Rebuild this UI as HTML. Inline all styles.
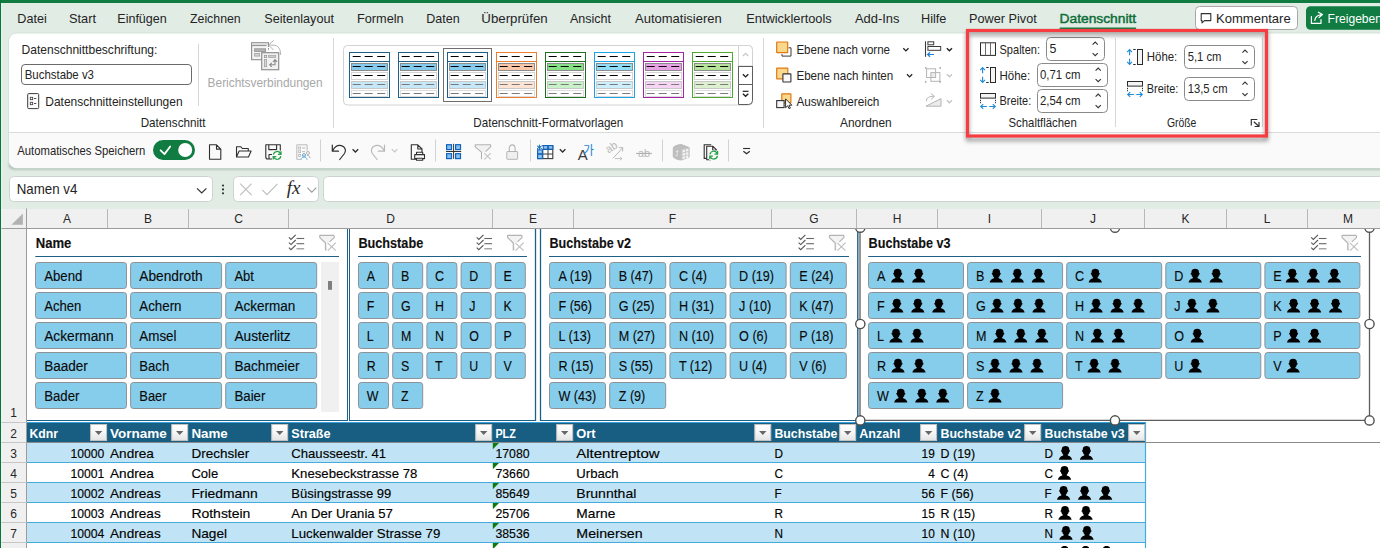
<!DOCTYPE html>
<html lang="de"><head><meta charset="utf-8"><title>Excel Datenschnitt</title>
<style>
html,body{margin:0;padding:0;background:#fff;overflow:hidden}
body{width:1380px;height:548px;font-family:'Liberation Sans', sans-serif;}
svg{display:block;font-family:'Liberation Sans', sans-serif;}
text{white-space:pre}
g.tb text{stroke:#000;stroke-width:.14px}
g.tb2 text{stroke:#111;stroke-width:.14px}
</style></head><body>
<svg width="1380" height="548" viewBox="0 0 1380 548">
<rect x="0" y="0" width="1380" height="548" fill="#e1ece5"/>
<rect x="0" y="0" width="1380" height="3" fill="#107c41"/>
<rect x="0" y="0" width="1.1" height="548" fill="#03763a"/>
<rect x="1.1" y="3" width="1" height="545" fill="#edf4ef"/>
<defs><filter id="fs" x="-5%" y="-20%" width="110%" height="150%"><feGaussianBlur stdDeviation="1.2"/></filter><filter id="fr" x="-10%" y="-15%" width="120%" height="135%"><feGaussianBlur stdDeviation="2.1"/></filter></defs>
<rect x="8.5" y="160" width="1400" height="9.8" rx="5" fill="#93a59a" filter="url(#fs)" opacity="0.6"/>
<rect x="8.5" y="33" width="1400" height="135" rx="8" fill="#ffffff" stroke="#d3e2d8" stroke-width="1"/>
<path d="M9 133h1380v27a8 8 0 0 1 -8 8h-1364a8 8 0 0 1 -8 -8z" fill="#fafafa"/>
<text x="17.3" y="22.6" font-size="13" fill="#242424" textLength="29.4" lengthAdjust="spacingAndGlyphs">Datei</text>
<text x="69.0" y="22.6" font-size="13" fill="#242424" textLength="27.0" lengthAdjust="spacingAndGlyphs">Start</text>
<text x="117.3" y="22.6" font-size="13" fill="#242424" textLength="49.4" lengthAdjust="spacingAndGlyphs">Einfügen</text>
<text x="190.0" y="22.6" font-size="13" fill="#242424" textLength="50.7" lengthAdjust="spacingAndGlyphs">Zeichnen</text>
<text x="264.3" y="22.6" font-size="13" fill="#242424" textLength="69.7" lengthAdjust="spacingAndGlyphs">Seitenlayout</text>
<text x="357.0" y="22.6" font-size="13" fill="#242424" textLength="46.7" lengthAdjust="spacingAndGlyphs">Formeln</text>
<text x="426.3" y="22.6" font-size="13" fill="#242424" textLength="33.4" lengthAdjust="spacingAndGlyphs">Daten</text>
<text x="481.3" y="22.6" font-size="13" fill="#242424" textLength="66.4" lengthAdjust="spacingAndGlyphs">Überprüfen</text>
<text x="570.0" y="22.6" font-size="13" fill="#242424" textLength="41.0" lengthAdjust="spacingAndGlyphs">Ansicht</text>
<text x="635.0" y="22.6" font-size="13" fill="#242424" textLength="86.7" lengthAdjust="spacingAndGlyphs">Automatisieren</text>
<text x="746.3" y="22.6" font-size="13" fill="#242424" textLength="85.4" lengthAdjust="spacingAndGlyphs">Entwicklertools</text>
<text x="855.0" y="22.6" font-size="13" fill="#242424" textLength="44.5" lengthAdjust="spacingAndGlyphs">Add-Ins</text>
<text x="921.0" y="22.6" font-size="13" fill="#242424" textLength="25.4" lengthAdjust="spacingAndGlyphs">Hilfe</text>
<text x="969.1" y="22.6" font-size="13" fill="#242424" textLength="67.7" lengthAdjust="spacingAndGlyphs">Power Pivot</text>
<text x="1059.5" y="22.6" font-size="13" fill="#0e6e39" textLength="76.7" lengthAdjust="spacingAndGlyphs" stroke="#0e6e39" stroke-width="0.45">Datenschnitt</text>
<rect x="1059.5" y="27.6" width="76.7" height="1.5" rx="0.7" fill="#107c41"/>
<rect x="1195.5" y="6.5" width="102" height="23" rx="4" fill="#ffffff" stroke="#a8a8a8" stroke-width="1"/>
<path d="M1201.2 13.6h9.6v7h-6.3l-2.5 2.3v-2.3h-0.8z" fill="none" stroke="#333" stroke-width="1.1" stroke-linejoin="round"/>
<text x="1216.0" y="22.6" font-size="13" fill="#242424" textLength="74.7" lengthAdjust="spacingAndGlyphs">Kommentare</text>
<rect x="1306" y="6.3" width="90" height="23.4" rx="4.5" fill="#107c41"/>
<path d="M1311.4 16.6v6.8h9.6v-3.8 M1314.8 20.4c0.4-3.3 2.9-5.4 6.8-5.8 M1318.4 12.2l4 2.4l-3.3 2.9" fill="none" stroke="#fff" stroke-width="1.2" stroke-linecap="round" stroke-linejoin="round"/>
<text transform="translate(1327.6,22.6) scale(0.93,1)" font-size="13" fill="#ffffff">Freigeben</text>
<line x1="9" y1="132.5" x2="1380" y2="132.5" stroke="#d9dcda" stroke-width="1"/>
<text x="21.5" y="54.2" font-size="13.5" fill="#242424" textLength="135.9" lengthAdjust="spacingAndGlyphs">Datenschnittbeschriftung:</text>
<rect x="21.5" y="64.5" width="170" height="20" rx="3.5" fill="#ffffff" stroke="#6b6b6b" stroke-width="1"/>
<text x="24.7" y="78.6" font-size="13.5" fill="#242424" textLength="69.3" lengthAdjust="spacingAndGlyphs">Buchstabe v3</text>
<rect x="27.7" y="93.6" width="11" height="15" rx="1" fill="#fdfdfd" stroke="#3b3b3b" stroke-width="1"/>
<rect x="30.3" y="97.3" width="2.4" height="2.4" fill="none" stroke="#3b3b3b" stroke-width="0.8"/>
<line x1="34" y1="98.5" x2="36.3" y2="98.5" stroke="#3b3b3b" stroke-width="0.9"/>
<rect x="30.3" y="102.3" width="2.4" height="2.4" fill="none" stroke="#3b3b3b" stroke-width="0.8"/>
<line x1="34" y1="103.5" x2="36.3" y2="103.5" stroke="#3b3b3b" stroke-width="0.9"/>
<text x="45.3" y="106.0" font-size="13.5" fill="#242424" textLength="137.3" lengthAdjust="spacingAndGlyphs">Datenschnitteinstellungen</text>
<text x="140.7" y="126.7" font-size="13.5" fill="#242424" textLength="64.9" lengthAdjust="spacingAndGlyphs">Datenschnitt</text>
<line x1="198.5" y1="44" x2="198.5" y2="106" stroke="#d6d6d6" stroke-width="1"/>
<rect x="251.6" y="42.7" width="16.9" height="17" fill="#f4f4f4" stroke="#8f8f8f" stroke-width="1.1"/>
<rect x="252.2" y="43.3" width="15.7" height="2" fill="#dadada"/>
<line x1="251.6" y1="45.6" x2="266.5" y2="45.6" stroke="#8f8f8f" stroke-width="1"/>
<rect x="254.6" y="48.8" width="11" height="2.6" fill="#b4b4b4" stroke="#8f8f8f" stroke-width="0.8"/>
<rect x="254.6" y="53.5" width="5" height="2.6" fill="#d2d2d2" stroke="#a2a2a2" stroke-width="0.8"/>
<rect x="266.8" y="47" width="3" height="5" fill="#ffffff"/>
<line x1="268.5" y1="48" x2="268.5" y2="51" stroke="#8f8f8f" stroke-width="1" stroke-dasharray="1.6 1.2"/>
<rect x="261.7" y="52.7" width="17" height="17" fill="#f1f1f1" stroke="#8f8f8f" stroke-width="1.2"/>
<rect x="264.4" y="55.4" width="2.2" height="2.2" fill="#e6e6e6" stroke="#9a9a9a" stroke-width="0.8"/>
<rect x="268.4" y="55.6" width="7.3" height="1.9" fill="#cccccc" stroke="#a2a2a2" stroke-width="0.7"/>
<rect x="264.4" y="59.5" width="2.2" height="7.2" fill="#d9d9d9" stroke="#a2a2a2" stroke-width="0.8"/>
<path d="M275 59.8v5h-5 M273 61.8l2-2.2l2 2.2 M271.8 62.8l-2.1 2l2.1 2" fill="none" stroke="#8a8a8a" stroke-width="1.1"/>
<path d="M280.4 55c0.6-5.6-2.2-10-7.4-9.9h-4 M273.6 40.4l-5 4.7l5 5" fill="none" stroke="#b2b2b2" stroke-width="1"/>
<text x="207.6" y="87.0" font-size="13.5" fill="#a8a8a8" textLength="115.0" lengthAdjust="spacingAndGlyphs">Berichtsverbindungen</text>
<line x1="333.5" y1="38" x2="333.5" y2="128" stroke="#d6d6d6" stroke-width="1"/>
<rect x="343.5" y="45.5" width="409" height="59.5" rx="4" fill="#ffffff" stroke="#d2d2d2" stroke-width="1"/>
<rect x="443.5" y="48.5" width="48" height="53" fill="#ffffff" stroke="#6e6e6e" stroke-width="1"/>
<rect x="349.5" y="52.5" width="40" height="45" fill="#ffffff" stroke="#1d5f86" stroke-width="1"/>
<line x1="349.5" y1="61.5" x2="389.5" y2="61.5" stroke="#1d5f86" stroke-width="1"/>
<rect x="351.5" y="63.5" width="36" height="7" fill="#84caec" stroke="#8c8c8c" stroke-width="1"/>
<rect x="351.5" y="72.5" width="36" height="7" fill="#ffffff" stroke="#d4d4d4" stroke-width="1"/>
<rect x="351.5" y="81.5" width="36" height="7" fill="#c6e7f7" stroke="#c8c8c8" stroke-width="1"/>
<rect x="351.5" y="90.5" width="36" height="6" fill="#ffffff" stroke="#dcdcdc" stroke-width="1"/>
<line x1="352.7" y1="56.5" x2="360.7" y2="56.5" stroke="#000" stroke-width="1"/>
<line x1="364.7" y1="56.5" x2="372.7" y2="56.5" stroke="#000" stroke-width="1"/>
<line x1="377.2" y1="56.5" x2="385.2" y2="56.5" stroke="#000" stroke-width="1"/>
<line x1="352.7" y1="66.5" x2="360.7" y2="66.5" stroke="#000" stroke-width="1"/>
<line x1="364.7" y1="66.5" x2="372.7" y2="66.5" stroke="#000" stroke-width="1"/>
<line x1="377.2" y1="66.5" x2="385.2" y2="66.5" stroke="#000" stroke-width="1"/>
<line x1="352.7" y1="75.5" x2="360.7" y2="75.5" stroke="#000" stroke-width="1"/>
<line x1="364.7" y1="75.5" x2="372.7" y2="75.5" stroke="#000" stroke-width="1"/>
<line x1="377.2" y1="75.5" x2="385.2" y2="75.5" stroke="#000" stroke-width="1"/>
<line x1="352.7" y1="84.5" x2="360.7" y2="84.5" stroke="#7a7a7a" stroke-width="1"/>
<line x1="364.7" y1="84.5" x2="372.7" y2="84.5" stroke="#7a7a7a" stroke-width="1"/>
<line x1="377.2" y1="84.5" x2="385.2" y2="84.5" stroke="#7a7a7a" stroke-width="1"/>
<line x1="352.7" y1="93.5" x2="360.7" y2="93.5" stroke="#7a7a7a" stroke-width="1"/>
<line x1="364.7" y1="93.5" x2="372.7" y2="93.5" stroke="#7a7a7a" stroke-width="1"/>
<line x1="377.2" y1="93.5" x2="385.2" y2="93.5" stroke="#7a7a7a" stroke-width="1"/>
<rect x="398.5" y="52.5" width="40" height="45" fill="#ffffff" stroke="#1d5f86" stroke-width="1"/>
<line x1="398.5" y1="61.5" x2="438.5" y2="61.5" stroke="#1d5f86" stroke-width="1"/>
<rect x="400.5" y="63.5" width="36" height="7" fill="#84caec" stroke="#8c8c8c" stroke-width="1"/>
<rect x="400.5" y="72.5" width="36" height="7" fill="#ffffff" stroke="#d4d4d4" stroke-width="1"/>
<rect x="400.5" y="81.5" width="36" height="7" fill="#c6e7f7" stroke="#c8c8c8" stroke-width="1"/>
<rect x="400.5" y="90.5" width="36" height="6" fill="#ffffff" stroke="#dcdcdc" stroke-width="1"/>
<line x1="401.7" y1="56.5" x2="409.7" y2="56.5" stroke="#000" stroke-width="1"/>
<line x1="413.7" y1="56.5" x2="421.7" y2="56.5" stroke="#000" stroke-width="1"/>
<line x1="426.2" y1="56.5" x2="434.2" y2="56.5" stroke="#000" stroke-width="1"/>
<line x1="401.7" y1="66.5" x2="409.7" y2="66.5" stroke="#000" stroke-width="1"/>
<line x1="413.7" y1="66.5" x2="421.7" y2="66.5" stroke="#000" stroke-width="1"/>
<line x1="426.2" y1="66.5" x2="434.2" y2="66.5" stroke="#000" stroke-width="1"/>
<line x1="401.7" y1="75.5" x2="409.7" y2="75.5" stroke="#000" stroke-width="1"/>
<line x1="413.7" y1="75.5" x2="421.7" y2="75.5" stroke="#000" stroke-width="1"/>
<line x1="426.2" y1="75.5" x2="434.2" y2="75.5" stroke="#000" stroke-width="1"/>
<line x1="401.7" y1="84.5" x2="409.7" y2="84.5" stroke="#7a7a7a" stroke-width="1"/>
<line x1="413.7" y1="84.5" x2="421.7" y2="84.5" stroke="#7a7a7a" stroke-width="1"/>
<line x1="426.2" y1="84.5" x2="434.2" y2="84.5" stroke="#7a7a7a" stroke-width="1"/>
<line x1="401.7" y1="93.5" x2="409.7" y2="93.5" stroke="#7a7a7a" stroke-width="1"/>
<line x1="413.7" y1="93.5" x2="421.7" y2="93.5" stroke="#7a7a7a" stroke-width="1"/>
<line x1="426.2" y1="93.5" x2="434.2" y2="93.5" stroke="#7a7a7a" stroke-width="1"/>
<rect x="447.5" y="52.5" width="40" height="45" fill="#ffffff" stroke="#1d5f86" stroke-width="1"/>
<line x1="447.5" y1="61.5" x2="487.5" y2="61.5" stroke="#1d5f86" stroke-width="1"/>
<rect x="449.5" y="63.5" width="36" height="7" fill="#84caec" stroke="#8c8c8c" stroke-width="1"/>
<rect x="449.5" y="72.5" width="36" height="7" fill="#ffffff" stroke="#d4d4d4" stroke-width="1"/>
<rect x="449.5" y="81.5" width="36" height="7" fill="#c6e7f7" stroke="#c8c8c8" stroke-width="1"/>
<rect x="449.5" y="90.5" width="36" height="6" fill="#ffffff" stroke="#dcdcdc" stroke-width="1"/>
<line x1="450.7" y1="56.5" x2="458.7" y2="56.5" stroke="#000" stroke-width="1"/>
<line x1="462.7" y1="56.5" x2="470.7" y2="56.5" stroke="#000" stroke-width="1"/>
<line x1="475.2" y1="56.5" x2="483.2" y2="56.5" stroke="#000" stroke-width="1"/>
<line x1="450.7" y1="66.5" x2="458.7" y2="66.5" stroke="#000" stroke-width="1"/>
<line x1="462.7" y1="66.5" x2="470.7" y2="66.5" stroke="#000" stroke-width="1"/>
<line x1="475.2" y1="66.5" x2="483.2" y2="66.5" stroke="#000" stroke-width="1"/>
<line x1="450.7" y1="75.5" x2="458.7" y2="75.5" stroke="#000" stroke-width="1"/>
<line x1="462.7" y1="75.5" x2="470.7" y2="75.5" stroke="#000" stroke-width="1"/>
<line x1="475.2" y1="75.5" x2="483.2" y2="75.5" stroke="#000" stroke-width="1"/>
<line x1="450.7" y1="84.5" x2="458.7" y2="84.5" stroke="#7a7a7a" stroke-width="1"/>
<line x1="462.7" y1="84.5" x2="470.7" y2="84.5" stroke="#7a7a7a" stroke-width="1"/>
<line x1="475.2" y1="84.5" x2="483.2" y2="84.5" stroke="#7a7a7a" stroke-width="1"/>
<line x1="450.7" y1="93.5" x2="458.7" y2="93.5" stroke="#7a7a7a" stroke-width="1"/>
<line x1="462.7" y1="93.5" x2="470.7" y2="93.5" stroke="#7a7a7a" stroke-width="1"/>
<line x1="475.2" y1="93.5" x2="483.2" y2="93.5" stroke="#7a7a7a" stroke-width="1"/>
<rect x="496.5" y="52.5" width="40" height="45" fill="#ffffff" stroke="#ee7c31" stroke-width="1"/>
<line x1="496.5" y1="61.5" x2="536.5" y2="61.5" stroke="#ee7c31" stroke-width="1"/>
<rect x="498.5" y="63.5" width="36" height="7" fill="#f9c6a8" stroke="#8c8c8c" stroke-width="1"/>
<rect x="498.5" y="72.5" width="36" height="7" fill="#ffffff" stroke="#d4d4d4" stroke-width="1"/>
<rect x="498.5" y="81.5" width="36" height="7" fill="#fde3d4" stroke="#c8c8c8" stroke-width="1"/>
<rect x="498.5" y="90.5" width="36" height="6" fill="#ffffff" stroke="#dcdcdc" stroke-width="1"/>
<line x1="499.7" y1="56.5" x2="507.7" y2="56.5" stroke="#000" stroke-width="1"/>
<line x1="511.7" y1="56.5" x2="519.7" y2="56.5" stroke="#000" stroke-width="1"/>
<line x1="524.2" y1="56.5" x2="532.2" y2="56.5" stroke="#000" stroke-width="1"/>
<line x1="499.7" y1="66.5" x2="507.7" y2="66.5" stroke="#000" stroke-width="1"/>
<line x1="511.7" y1="66.5" x2="519.7" y2="66.5" stroke="#000" stroke-width="1"/>
<line x1="524.2" y1="66.5" x2="532.2" y2="66.5" stroke="#000" stroke-width="1"/>
<line x1="499.7" y1="75.5" x2="507.7" y2="75.5" stroke="#000" stroke-width="1"/>
<line x1="511.7" y1="75.5" x2="519.7" y2="75.5" stroke="#000" stroke-width="1"/>
<line x1="524.2" y1="75.5" x2="532.2" y2="75.5" stroke="#000" stroke-width="1"/>
<line x1="499.7" y1="84.5" x2="507.7" y2="84.5" stroke="#7a7a7a" stroke-width="1"/>
<line x1="511.7" y1="84.5" x2="519.7" y2="84.5" stroke="#7a7a7a" stroke-width="1"/>
<line x1="524.2" y1="84.5" x2="532.2" y2="84.5" stroke="#7a7a7a" stroke-width="1"/>
<line x1="499.7" y1="93.5" x2="507.7" y2="93.5" stroke="#7a7a7a" stroke-width="1"/>
<line x1="511.7" y1="93.5" x2="519.7" y2="93.5" stroke="#7a7a7a" stroke-width="1"/>
<line x1="524.2" y1="93.5" x2="532.2" y2="93.5" stroke="#7a7a7a" stroke-width="1"/>
<rect x="545.5" y="52.5" width="40" height="45" fill="#ffffff" stroke="#1f6e1f" stroke-width="1"/>
<line x1="545.5" y1="61.5" x2="585.5" y2="61.5" stroke="#1f6e1f" stroke-width="1"/>
<rect x="547.5" y="63.5" width="36" height="7" fill="#86e086" stroke="#8c8c8c" stroke-width="1"/>
<rect x="547.5" y="72.5" width="36" height="7" fill="#ffffff" stroke="#d4d4d4" stroke-width="1"/>
<rect x="547.5" y="81.5" width="36" height="7" fill="#c9f1c9" stroke="#c8c8c8" stroke-width="1"/>
<rect x="547.5" y="90.5" width="36" height="6" fill="#ffffff" stroke="#dcdcdc" stroke-width="1"/>
<line x1="548.7" y1="56.5" x2="556.7" y2="56.5" stroke="#000" stroke-width="1"/>
<line x1="560.7" y1="56.5" x2="568.7" y2="56.5" stroke="#000" stroke-width="1"/>
<line x1="573.2" y1="56.5" x2="581.2" y2="56.5" stroke="#000" stroke-width="1"/>
<line x1="548.7" y1="66.5" x2="556.7" y2="66.5" stroke="#000" stroke-width="1"/>
<line x1="560.7" y1="66.5" x2="568.7" y2="66.5" stroke="#000" stroke-width="1"/>
<line x1="573.2" y1="66.5" x2="581.2" y2="66.5" stroke="#000" stroke-width="1"/>
<line x1="548.7" y1="75.5" x2="556.7" y2="75.5" stroke="#000" stroke-width="1"/>
<line x1="560.7" y1="75.5" x2="568.7" y2="75.5" stroke="#000" stroke-width="1"/>
<line x1="573.2" y1="75.5" x2="581.2" y2="75.5" stroke="#000" stroke-width="1"/>
<line x1="548.7" y1="84.5" x2="556.7" y2="84.5" stroke="#7a7a7a" stroke-width="1"/>
<line x1="560.7" y1="84.5" x2="568.7" y2="84.5" stroke="#7a7a7a" stroke-width="1"/>
<line x1="573.2" y1="84.5" x2="581.2" y2="84.5" stroke="#7a7a7a" stroke-width="1"/>
<line x1="548.7" y1="93.5" x2="556.7" y2="93.5" stroke="#7a7a7a" stroke-width="1"/>
<line x1="560.7" y1="93.5" x2="568.7" y2="93.5" stroke="#7a7a7a" stroke-width="1"/>
<line x1="573.2" y1="93.5" x2="581.2" y2="93.5" stroke="#7a7a7a" stroke-width="1"/>
<rect x="594.5" y="52.5" width="40" height="45" fill="#ffffff" stroke="#1ba3e4" stroke-width="1"/>
<line x1="594.5" y1="61.5" x2="634.5" y2="61.5" stroke="#1ba3e4" stroke-width="1"/>
<rect x="596.5" y="63.5" width="36" height="7" fill="#8fdcf8" stroke="#8c8c8c" stroke-width="1"/>
<rect x="596.5" y="72.5" width="36" height="7" fill="#ffffff" stroke="#d4d4d4" stroke-width="1"/>
<rect x="596.5" y="81.5" width="36" height="7" fill="#cdeefb" stroke="#c8c8c8" stroke-width="1"/>
<rect x="596.5" y="90.5" width="36" height="6" fill="#ffffff" stroke="#dcdcdc" stroke-width="1"/>
<line x1="597.7" y1="56.5" x2="605.7" y2="56.5" stroke="#000" stroke-width="1"/>
<line x1="609.7" y1="56.5" x2="617.7" y2="56.5" stroke="#000" stroke-width="1"/>
<line x1="622.2" y1="56.5" x2="630.2" y2="56.5" stroke="#000" stroke-width="1"/>
<line x1="597.7" y1="66.5" x2="605.7" y2="66.5" stroke="#000" stroke-width="1"/>
<line x1="609.7" y1="66.5" x2="617.7" y2="66.5" stroke="#000" stroke-width="1"/>
<line x1="622.2" y1="66.5" x2="630.2" y2="66.5" stroke="#000" stroke-width="1"/>
<line x1="597.7" y1="75.5" x2="605.7" y2="75.5" stroke="#000" stroke-width="1"/>
<line x1="609.7" y1="75.5" x2="617.7" y2="75.5" stroke="#000" stroke-width="1"/>
<line x1="622.2" y1="75.5" x2="630.2" y2="75.5" stroke="#000" stroke-width="1"/>
<line x1="597.7" y1="84.5" x2="605.7" y2="84.5" stroke="#7a7a7a" stroke-width="1"/>
<line x1="609.7" y1="84.5" x2="617.7" y2="84.5" stroke="#7a7a7a" stroke-width="1"/>
<line x1="622.2" y1="84.5" x2="630.2" y2="84.5" stroke="#7a7a7a" stroke-width="1"/>
<line x1="597.7" y1="93.5" x2="605.7" y2="93.5" stroke="#7a7a7a" stroke-width="1"/>
<line x1="609.7" y1="93.5" x2="617.7" y2="93.5" stroke="#7a7a7a" stroke-width="1"/>
<line x1="622.2" y1="93.5" x2="630.2" y2="93.5" stroke="#7a7a7a" stroke-width="1"/>
<rect x="643.5" y="52.5" width="40" height="45" fill="#ffffff" stroke="#a424a4" stroke-width="1"/>
<line x1="643.5" y1="61.5" x2="683.5" y2="61.5" stroke="#a424a4" stroke-width="1"/>
<rect x="645.5" y="63.5" width="36" height="7" fill="#e9a1e6" stroke="#8c8c8c" stroke-width="1"/>
<rect x="645.5" y="72.5" width="36" height="7" fill="#ffffff" stroke="#d4d4d4" stroke-width="1"/>
<rect x="645.5" y="81.5" width="36" height="7" fill="#f6d4f4" stroke="#c8c8c8" stroke-width="1"/>
<rect x="645.5" y="90.5" width="36" height="6" fill="#ffffff" stroke="#dcdcdc" stroke-width="1"/>
<line x1="646.7" y1="56.5" x2="654.7" y2="56.5" stroke="#000" stroke-width="1"/>
<line x1="658.7" y1="56.5" x2="666.7" y2="56.5" stroke="#000" stroke-width="1"/>
<line x1="671.2" y1="56.5" x2="679.2" y2="56.5" stroke="#000" stroke-width="1"/>
<line x1="646.7" y1="66.5" x2="654.7" y2="66.5" stroke="#000" stroke-width="1"/>
<line x1="658.7" y1="66.5" x2="666.7" y2="66.5" stroke="#000" stroke-width="1"/>
<line x1="671.2" y1="66.5" x2="679.2" y2="66.5" stroke="#000" stroke-width="1"/>
<line x1="646.7" y1="75.5" x2="654.7" y2="75.5" stroke="#000" stroke-width="1"/>
<line x1="658.7" y1="75.5" x2="666.7" y2="75.5" stroke="#000" stroke-width="1"/>
<line x1="671.2" y1="75.5" x2="679.2" y2="75.5" stroke="#000" stroke-width="1"/>
<line x1="646.7" y1="84.5" x2="654.7" y2="84.5" stroke="#7a7a7a" stroke-width="1"/>
<line x1="658.7" y1="84.5" x2="666.7" y2="84.5" stroke="#7a7a7a" stroke-width="1"/>
<line x1="671.2" y1="84.5" x2="679.2" y2="84.5" stroke="#7a7a7a" stroke-width="1"/>
<line x1="646.7" y1="93.5" x2="654.7" y2="93.5" stroke="#7a7a7a" stroke-width="1"/>
<line x1="658.7" y1="93.5" x2="666.7" y2="93.5" stroke="#7a7a7a" stroke-width="1"/>
<line x1="671.2" y1="93.5" x2="679.2" y2="93.5" stroke="#7a7a7a" stroke-width="1"/>
<rect x="692.5" y="52.5" width="40" height="45" fill="#ffffff" stroke="#4ea72e" stroke-width="1"/>
<line x1="692.5" y1="61.5" x2="732.5" y2="61.5" stroke="#4ea72e" stroke-width="1"/>
<rect x="694.5" y="63.5" width="36" height="7" fill="#b4e29a" stroke="#8c8c8c" stroke-width="1"/>
<rect x="694.5" y="72.5" width="36" height="7" fill="#ffffff" stroke="#d4d4d4" stroke-width="1"/>
<rect x="694.5" y="81.5" width="36" height="7" fill="#dcf0cf" stroke="#c8c8c8" stroke-width="1"/>
<rect x="694.5" y="90.5" width="36" height="6" fill="#ffffff" stroke="#dcdcdc" stroke-width="1"/>
<line x1="695.7" y1="56.5" x2="703.7" y2="56.5" stroke="#000" stroke-width="1"/>
<line x1="707.7" y1="56.5" x2="715.7" y2="56.5" stroke="#000" stroke-width="1"/>
<line x1="720.2" y1="56.5" x2="728.2" y2="56.5" stroke="#000" stroke-width="1"/>
<line x1="695.7" y1="66.5" x2="703.7" y2="66.5" stroke="#000" stroke-width="1"/>
<line x1="707.7" y1="66.5" x2="715.7" y2="66.5" stroke="#000" stroke-width="1"/>
<line x1="720.2" y1="66.5" x2="728.2" y2="66.5" stroke="#000" stroke-width="1"/>
<line x1="695.7" y1="75.5" x2="703.7" y2="75.5" stroke="#000" stroke-width="1"/>
<line x1="707.7" y1="75.5" x2="715.7" y2="75.5" stroke="#000" stroke-width="1"/>
<line x1="720.2" y1="75.5" x2="728.2" y2="75.5" stroke="#000" stroke-width="1"/>
<line x1="695.7" y1="84.5" x2="703.7" y2="84.5" stroke="#7a7a7a" stroke-width="1"/>
<line x1="707.7" y1="84.5" x2="715.7" y2="84.5" stroke="#7a7a7a" stroke-width="1"/>
<line x1="720.2" y1="84.5" x2="728.2" y2="84.5" stroke="#7a7a7a" stroke-width="1"/>
<line x1="695.7" y1="93.5" x2="703.7" y2="93.5" stroke="#7a7a7a" stroke-width="1"/>
<line x1="707.7" y1="93.5" x2="715.7" y2="93.5" stroke="#7a7a7a" stroke-width="1"/>
<line x1="720.2" y1="93.5" x2="728.2" y2="93.5" stroke="#7a7a7a" stroke-width="1"/>
<path d="M738.5 45.5 h10 a4 4 0 0 1 4 4 v16.5 h-14z" fill="#ffffff" stroke="#d2d2d2" stroke-width="1"/>
<path d="M742.9 56l2.7-2.6l2.7 2.6" fill="none" stroke="#c8c8c8" stroke-width="1.3"/>
<rect x="738.5" y="66.5" width="14" height="18" fill="#ffffff" stroke="#5e5e5e" stroke-width="1"/>
<path d="M742.9 74.3l2.7 2.6l2.7-2.6" fill="none" stroke="#222" stroke-width="1.4"/>
<path d="M738.5 84.5 h14 v16 a4 4 0 0 1 -4 4 h-10z" fill="#ffffff" stroke="#5e5e5e" stroke-width="1"/>
<line x1="742.7" y1="91.3" x2="748.5" y2="91.3" stroke="#222" stroke-width="1.2"/>
<path d="M742.9 93.7l2.7 2.6l2.7-2.6" fill="none" stroke="#222" stroke-width="1.4"/>
<text x="473.3" y="126.7" font-size="13.5" fill="#242424" textLength="150.0" lengthAdjust="spacingAndGlyphs">Datenschnitt-Formatvorlagen</text>
<line x1="763.5" y1="38" x2="763.5" y2="128" stroke="#d6d6d6" stroke-width="1"/>
<path d="M788.5 47.8h2.5v8.3h-9v-2" fill="none" stroke="#3b3b3b" stroke-width="1"/>
<rect x="776.7" y="42" width="11" height="10.6" rx="0.4" fill="#f9d88e" stroke="#e07810" stroke-width="1.2"/>
<text x="796.4" y="53.5" font-size="13.5" fill="#242424" textLength="93.6" lengthAdjust="spacingAndGlyphs">Ebene nach vorne</text>
<path d="M903.3 48.3l2.6 2.6l2.6-2.6" fill="none" stroke="#222" stroke-width="1.3"/>
<rect x="776.7" y="68.1" width="11.1" height="10.8" rx="0.4" fill="#f9d88e" stroke="#e07810" stroke-width="1.2"/>
<rect x="782.9" y="73.9" width="8" height="8.1" rx="0.4" fill="#f8f8f8" stroke="#333333" stroke-width="1.1"/>
<text x="796.4" y="79.5" font-size="13.5" fill="#242424" textLength="96.9" lengthAdjust="spacingAndGlyphs">Ebene nach hinten</text>
<path d="M907 74.3l2.6 2.6l2.6-2.6" fill="none" stroke="#222" stroke-width="1.3"/>
<rect x="781.8" y="93.8" width="9.1" height="9" rx="0.4" fill="#f9d88e" stroke="#e07810" stroke-width="1.2"/>
<rect x="776.7" y="100.6" width="7.4" height="7" fill="#f8f8f8" stroke="#333333" stroke-width="1.1"/>
<path d="M785.6 98.9v8.8l2.1-1.9l1.4 2.9l1.3-0.6l-1.4-2.9h2.9z" fill="#ffffff" stroke="#1a1a1a" stroke-width="0.9" stroke-linejoin="round"/>
<text x="796.4" y="105.5" font-size="13.5" fill="#242424" textLength="82.9" lengthAdjust="spacingAndGlyphs">Auswahlbereich</text>
<text x="840.0" y="126.7" font-size="13.5" fill="#242424" textLength="51.7" lengthAdjust="spacingAndGlyphs">Anordnen</text>
<line x1="925.5" y1="41.3" x2="925.5" y2="56.8" stroke="#3b3b3b" stroke-width="1.1"/>
<rect x="927.9" y="41.8" width="5.8" height="3" fill="none" stroke="#3b3b3b" stroke-width="1"/>
<rect x="927.9" y="46.5" width="12.8" height="3.8" fill="none" stroke="#3b3b3b" stroke-width="1"/>
<path d="M934 54.5h-6.3 M930 52.2l-2.4 2.3l2.4 2.3" fill="none" stroke="#1e7fd6" stroke-width="1.2"/>
<path d="M946.8 48.2l2.6 2.5l2.6-2.5" fill="none" stroke="#222" stroke-width="1.4"/>
<rect x="930.9" y="72.6" width="4.7" height="4.8" fill="#ececec"/>
<rect x="926.6" y="68.8" width="9" height="8.7" fill="none" stroke="#b4b4b4" stroke-width="1"/>
<rect x="930.9" y="72.6" width="9" height="8.7" fill="none" stroke="#b4b4b4" stroke-width="1"/>
<rect x="924.9" y="67.1" width="1.6" height="1.6" fill="#a8a8a8"/>
<rect x="939.4" y="67.1" width="1.6" height="1.6" fill="#a8a8a8"/>
<rect x="924.9" y="81.1" width="1.6" height="1.6" fill="#a8a8a8"/>
<rect x="939.4" y="81.1" width="1.6" height="1.6" fill="#a8a8a8"/>
<path d="M946.8 74.3l2.6 2.5l2.6-2.5" fill="none" stroke="#c2c2c2" stroke-width="1.2"/>
<path d="M926 106.2h15v-7.6z" fill="#ececec" stroke="#b4b4b4" stroke-width="1"/>
<path d="M926.6 101.4c-0.8-3.6 3-5.4 7.4-5 M930.8 93.5l3.6 2.9l-3.4 3" fill="none" stroke="#b4b4b4" stroke-width="1"/>
<path d="M946.8 100.3l2.6 2.5l2.6-2.5" fill="none" stroke="#c2c2c2" stroke-width="1.2"/>
<rect x="980.5" y="42.8" width="15" height="12.6" fill="#fdfdfd" stroke="#2b2b2b" stroke-width="1"/>
<line x1="985.5" y1="43" x2="985.5" y2="55.2" stroke="#6a6a6a" stroke-width="1"/>
<line x1="990.5" y1="43" x2="990.5" y2="55.2" stroke="#6a6a6a" stroke-width="1"/>
<text x="999.5" y="53.5" font-size="13.5" fill="#242424" textLength="40.5" lengthAdjust="spacingAndGlyphs">Spalten:</text>
<rect x="1046.5" y="37.5" width="58" height="23" rx="4" fill="#ffffff" stroke="#8a8a8a" stroke-width="1"/>
<text transform="translate(1049.6,53.0) scale(0.92,1)" font-size="13.5" fill="#242424">5</text>
<path d="M1092.6000000000001 44.7l2.6-2.6l2.6 2.6" fill="none" stroke="#333" stroke-width="1.1"/>
<path d="M1092.6000000000001 53.1l2.6 2.6l2.6-2.6" fill="none" stroke="#333" stroke-width="1.1"/>
<path d="M982.6 67.7v5.5 M982.6 76.8v5.5 M980.2 70.1l2.4-2.5l2.4 2.5 M980.2 79.9l2.4 2.5l2.4-2.5" fill="none" stroke="#1e8ad6" stroke-width="1.1"/>
<rect x="990.5" y="67.5" width="5" height="15" fill="#f4f4f4" stroke="#2b2b2b" stroke-width="1"/>
<line x1="986.2" y1="67.5" x2="988.7" y2="67.5" stroke="#2b2b2b" stroke-width="1"/>
<line x1="986.2" y1="82.5" x2="988.7" y2="82.5" stroke="#2b2b2b" stroke-width="1"/>
<text x="999.5" y="79.5" font-size="13.5" fill="#242424" textLength="30.7" lengthAdjust="spacingAndGlyphs">Höhe:</text>
<rect x="1037.5" y="63.5" width="70" height="23" rx="4" fill="#ffffff" stroke="#8a8a8a" stroke-width="1"/>
<text x="1040.0" y="79.0" font-size="13.5" fill="#242424" textLength="40.5" lengthAdjust="spacingAndGlyphs">0,71 cm</text>
<path d="M1095.6000000000001 70.7l2.6-2.6l2.6 2.6" fill="none" stroke="#333" stroke-width="1.1"/>
<path d="M1095.6000000000001 79.1l2.6 2.6l2.6-2.6" fill="none" stroke="#333" stroke-width="1.1"/>
<rect x="980.5" y="93.5" width="15" height="4.6" fill="#f4f4f4" stroke="#2b2b2b" stroke-width="1"/>
<line x1="980.5" y1="99.8" x2="980.5" y2="103.2" stroke="#2b2b2b" stroke-width="1" stroke-dasharray="1.4 0.9"/>
<line x1="995.5" y1="99.8" x2="995.5" y2="103.2" stroke="#2b2b2b" stroke-width="1" stroke-dasharray="1.4 0.9"/>
<path d="M980.7 106.5h6.2 M989.3 106.5h6 M983.2 104.1l-2.5 2.4l2.5 2.4 M992.8 104.1l2.5 2.4l-2.5 2.4" fill="none" stroke="#1e8ad6" stroke-width="1.1"/>
<text x="999.5" y="105.3" font-size="13.5" fill="#242424" textLength="31.7" lengthAdjust="spacingAndGlyphs">Breite:</text>
<rect x="1037.5" y="89.5" width="70" height="23" rx="4" fill="#ffffff" stroke="#8a8a8a" stroke-width="1"/>
<text x="1040.0" y="105.0" font-size="13.5" fill="#242424" textLength="40.5" lengthAdjust="spacingAndGlyphs">2,54 cm</text>
<path d="M1095.6000000000001 96.7l2.6-2.6l2.6 2.6" fill="none" stroke="#333" stroke-width="1.1"/>
<path d="M1095.6000000000001 105.1l2.6 2.6l2.6-2.6" fill="none" stroke="#333" stroke-width="1.1"/>
<text x="1008.5" y="126.9" font-size="13.5" fill="#242424" textLength="68.2" lengthAdjust="spacingAndGlyphs">Schaltflächen</text>
<line x1="1115.5" y1="38" x2="1115.5" y2="127" stroke="#d6d6d6" stroke-width="1"/>
<path d="M1129.6 49.7v5.5 M1129.6 58.8v5.5 M1127.1999999999998 52.1l2.4-2.5l2.4 2.5 M1127.1999999999998 61.9l2.4 2.5l2.4-2.5" fill="none" stroke="#1e8ad6" stroke-width="1.1"/>
<rect x="1137.5" y="49.5" width="5" height="15" fill="#f4f4f4" stroke="#2b2b2b" stroke-width="1"/>
<line x1="1133.2" y1="49.5" x2="1135.7" y2="49.5" stroke="#2b2b2b" stroke-width="1"/>
<line x1="1133.2" y1="64.5" x2="1135.7" y2="64.5" stroke="#2b2b2b" stroke-width="1"/>
<text x="1146.8" y="61.1" font-size="13.5" fill="#242424" textLength="30.5" lengthAdjust="spacingAndGlyphs">Höhe:</text>
<rect x="1184.5" y="45.5" width="70" height="23" rx="4" fill="#ffffff" stroke="#8a8a8a" stroke-width="1"/>
<text x="1187.7" y="61.1" font-size="13.5" fill="#242424" textLength="33.7" lengthAdjust="spacingAndGlyphs">5,1 cm</text>
<path d="M1242.4 52.7l2.6-2.6l2.6 2.6" fill="none" stroke="#333" stroke-width="1.1"/>
<path d="M1242.4 61.1l2.6 2.6l2.6-2.6" fill="none" stroke="#333" stroke-width="1.1"/>
<rect x="1127.5" y="81.5" width="15" height="4.6" fill="#f4f4f4" stroke="#2b2b2b" stroke-width="1"/>
<line x1="1127.5" y1="87.8" x2="1127.5" y2="91.2" stroke="#2b2b2b" stroke-width="1" stroke-dasharray="1.4 0.9"/>
<line x1="1142.5" y1="87.8" x2="1142.5" y2="91.2" stroke="#2b2b2b" stroke-width="1" stroke-dasharray="1.4 0.9"/>
<path d="M1127.7 94.5h6.2 M1136.3 94.5h6 M1130.2 92.1l-2.5 2.4l2.5 2.4 M1139.8 92.1l2.5 2.4l-2.5 2.4" fill="none" stroke="#1e8ad6" stroke-width="1.1"/>
<text x="1146.8" y="93.2" font-size="13.5" fill="#242424" textLength="31.5" lengthAdjust="spacingAndGlyphs">Breite:</text>
<rect x="1184.5" y="77.5" width="70" height="23" rx="4" fill="#ffffff" stroke="#8a8a8a" stroke-width="1"/>
<text x="1187.7" y="93.2" font-size="13.5" fill="#242424" textLength="39.8" lengthAdjust="spacingAndGlyphs">13,5 cm</text>
<path d="M1242.4 84.7l2.6-2.6l2.6 2.6" fill="none" stroke="#333" stroke-width="1.1"/>
<path d="M1242.4 93.1l2.6 2.6l2.6-2.6" fill="none" stroke="#333" stroke-width="1.1"/>
<text x="1166.9" y="126.9" font-size="13.5" fill="#242424" textLength="29.5" lengthAdjust="spacingAndGlyphs">Größe</text>
<path d="M1251.3 125.5v-6h6 M1253.8 121.8l5 4.5 M1259 122.1v4.4h-4.4" fill="none" stroke="#333" stroke-width="1.2"/>
<line x1="1262.5" y1="38" x2="1262.5" y2="127" stroke="#d6d6d6" stroke-width="1"/>
<text x="17.3" y="154.7" font-size="13.5" fill="#242424" textLength="128.1" lengthAdjust="spacingAndGlyphs">Automatisches Speichern</text>
<rect x="153" y="140" width="42" height="20" rx="10" fill="#107c41"/>
<circle cx="185.2" cy="150" r="7" fill="#ffffff"/>
<path d="M160.6 150.3l3.9 3.8l5.7-7.6" fill="none" stroke="#fff" stroke-width="1.8" stroke-linecap="round" stroke-linejoin="round"/>
<path d="M209.5 144.8h7l4.3 4.3v10.2h-11.3z M216.5 144.8v4.3h4.3" fill="none" stroke="#2f2f2f" stroke-width="1.1" stroke-linejoin="round"/>
<path d="M236.5 157v-10.3h4.2l1.6 1.8h6v2.5 M236.5 157l2.6-6h12l-2.6 6z" fill="none" stroke="#2f2f2f" stroke-width="1.1" stroke-linejoin="round"/>
<path d="M272 159h-4.2a2 2 0 0 1 -2-2v-12.2h12.5l2 0v7.2 M268.8 144.8v4.8h7.8v-4.8 M269 159v-4.5h3.2" fill="none" stroke="#2f2f2f" stroke-width="1.1" stroke-linejoin="round"/>
<rect x="272.2" y="150.6" width="9.8" height="9.8" fill="#fafafa"/>
<path d="M273.4 154.7A3.7 3.7 0 0 1 280.4 153.6 M281.0 151.2v3.1h-3.1 M280.8 156.1A3.7 3.7 0 0 1 273.8 157.2 M273.2 159.6v-3.1h3.1" fill="none" stroke="#22a045" stroke-width="1.25"/>
<path d="M301 159.3h-4.2v-14.5h10.3v6" fill="none" stroke="#b9b9b9" stroke-width="1"/>
<rect x="298.6" y="147" width="2" height="2" fill="none" stroke="#b9b9b9" stroke-width="0.8"/>
<line x1="302" y1="148" x2="305.3" y2="148" stroke="#b9b9b9" stroke-width="1"/>
<rect x="298.6" y="150.7" width="2" height="2" fill="none" stroke="#b9b9b9" stroke-width="0.8"/>
<line x1="302" y1="151.7" x2="305.3" y2="151.7" stroke="#b9b9b9" stroke-width="1"/>
<rect x="298.6" y="154.4" width="2" height="2" fill="none" stroke="#b9b9b9" stroke-width="0.8"/>
<line x1="302" y1="155.4" x2="305.3" y2="155.4" stroke="#b9b9b9" stroke-width="1"/>
<circle cx="304" cy="155.2" r="1.6" fill="none" stroke="#6aaee0" stroke-width="1"/>
<path d="M301 159.8c0.3-2 1.5-2.8 3-2.8s2.7 0.8 3 2.8" fill="none" stroke="#6aaee0" stroke-width="1"/>
<circle cx="308" cy="153" r="1.5" fill="none" stroke="#a9a9a9" stroke-width="0.9"/>
<path d="M307 155.7c1.6-0.6 2.8 0.4 3 2.4" fill="none" stroke="#a9a9a9" stroke-width="0.9"/>
<line x1="320.5" y1="139.5" x2="320.5" y2="161.5" stroke="#d2d2d2" stroke-width="1"/>
<path d="M332.3 145v6.2h6.2 M332.6 150.8c1.8-3.6 5.2-6 8.7-5.2c3.8 0.9 5.3 5 3.2 7.9l-4.8 6" fill="none" stroke="#2f2f2f" stroke-width="1.2" stroke-linecap="round" stroke-linejoin="round"/>
<path d="M352.6 149.2l2.8 2.8l2.8-2.8" fill="none" stroke="#2f2f2f" stroke-width="1.3"/>
<path d="M384.5 145v6.2h-6.2 M384.2 150.8c-1.8-3.6-5.2-6-8.7-5.2c-3.8 0.9-5.3 5-3.2 7.9l4.8 6" fill="none" stroke="#b9b9b9" stroke-width="1.2" stroke-linecap="round" stroke-linejoin="round"/>
<path d="M391.8 149.2l2.8 2.8l2.8-2.8" fill="none" stroke="#c6c6c6" stroke-width="1.2"/>
<path d="M416.5 159.3h-5.2v-14.5h6.5l4.2 4.2v3 M417.8 144.8v4.2h4.2" fill="none" stroke="#2f2f2f" stroke-width="1.1" stroke-linejoin="round"/>
<path d="M416.5 152.2h6.2v2.4h1.8v4h-1.8v1.6h-6.2v-1.6h-1.8v-4h1.8z M416.5 154.6h6.2 M416.5 158.2h6.2" fill="#fafafa" stroke="#2f2f2f" stroke-width="1.1" stroke-linejoin="round"/>
<line x1="435.5" y1="139.5" x2="435.5" y2="161.5" stroke="#d2d2d2" stroke-width="1"/>
<rect x="446.6" y="144.7" width="4.9" height="4.9" fill="#86c0f1" stroke="#0f63bd" stroke-width="1.2"/>
<rect x="455.6" y="144.7" width="4.9" height="4.9" fill="#86c0f1" stroke="#0f63bd" stroke-width="1.2"/>
<rect x="446.6" y="153.7" width="4.9" height="4.9" fill="#86c0f1" stroke="#0f63bd" stroke-width="1.2"/>
<rect x="455.6" y="153.7" width="4.9" height="4.9" fill="#86c0f1" stroke="#0f63bd" stroke-width="1.2"/>
<line x1="453.6" y1="143.8" x2="453.6" y2="158.9" stroke="#333" stroke-width="1"/>
<line x1="446" y1="151.5" x2="461.2" y2="151.5" stroke="#333" stroke-width="1"/>
<path d="M475.2 144.8h15.4v2l-5.6 5.3l-3.5 1.2v5.9l0 0v-7.1l-6.3-5.3z" fill="#f1f1f1"/>
<path d="M481.5 159.2v-7.1l-6.3-5.3v-2h15.4v2l-5 4.8" fill="none" stroke="#b2b2b2" stroke-width="1.1" stroke-linejoin="round"/>
<path d="M484.3 153.2l6.4 6.2 M490.7 153.2l-6.4 6.2" fill="none" stroke="#c2c2c2" stroke-width="1.1"/>
<rect x="506.8" y="151.5" width="10.8" height="7.8" rx="0.6" fill="#efefef" stroke="#b4b4b4" stroke-width="1"/>
<path d="M509.3 151.3v-3.1a2.9 3.3 0 0 1 5.8 0v3.1" fill="none" stroke="#b4b4b4" stroke-width="1.1"/>
<line x1="530.5" y1="139.5" x2="530.5" y2="161.5" stroke="#d2d2d2" stroke-width="1"/>
<rect x="537.6" y="145.6" width="15.2" height="13" fill="#ffffff" stroke="#3a3a3a" stroke-width="1.1"/>
<line x1="542.8" y1="149.5" x2="542.8" y2="158.6" stroke="#3a3a3a" stroke-width="1"/>
<line x1="548" y1="149.5" x2="548" y2="158.6" stroke="#3a3a3a" stroke-width="1"/>
<line x1="542.8" y1="154" x2="552.8" y2="154" stroke="#3a3a3a" stroke-width="1"/>
<line x1="542.8" y1="149.5" x2="552.8" y2="149.5" stroke="#3a3a3a" stroke-width="1"/>
<rect x="543.2" y="145.6" width="4.6" height="3.6" fill="#8cc3f0" stroke="#0f63bd" stroke-width="1.1"/>
<rect x="548.4" y="145.6" width="4.4" height="3.6" fill="#8cc3f0" stroke="#0f63bd" stroke-width="1.1"/>
<rect x="537.6" y="149.8" width="4.8" height="4" fill="#8cc3f0" stroke="#0f63bd" stroke-width="1.1"/>
<rect x="537.6" y="154.3" width="4.8" height="4.3" fill="#8cc3f0" stroke="#0f63bd" stroke-width="1.1"/>
<rect x="536.4" y="143.8" width="5.8" height="5.4" fill="#fafafa"/>
<path d="M539.4 144.6v5.4 M537 145.9l4.8 2.8 M541.8 145.9l-4.8 2.8" fill="none" stroke="#0f6cbd" stroke-width="1"/>
<path d="M559.8 149.2l2.8 2.8l2.8-2.8" fill="none" stroke="#2f2f2f" stroke-width="1.3"/>
<text transform="translate(577.8,159.6) scale(0.96,1)" font-size="15.5" fill="#3c3c3c">A</text>
<text transform="translate(583.0,155.2) scale(0.95,1)" font-size="12.5" fill="#1e88d8" font-family="'Liberation Sans','Noto Sans CJK KR','NanumGothic',sans-serif">가</text>
<text transform="translate(608.6,153.6) rotate(-34) scale(0.95,1)" font-size="11" fill="#b4b4b4">ab</text>
<path d="M612.8 158.4l9.8-10.4 M618.8 147.7l4-0.1l-0.2 4" fill="none" stroke="#b9b9b9" stroke-width="1"/>
<path d="M615 158.6h6.8 M620.2 157l1.8 1.6l-1.8 1.6" fill="none" stroke="#b9b9b9" stroke-width="0.9"/>
<text transform="translate(638.1,156.6) scale(0.98,1)" font-size="11" fill="#b9b9b9">ab</text>
<line x1="636" y1="153.4" x2="652" y2="153.4" stroke="#ababab" stroke-width="1"/>
<line x1="662.5" y1="139.5" x2="662.5" y2="161.5" stroke="#d2d2d2" stroke-width="1"/>
<path d="M673.3 147.4c2.2-2.2 6-3 8.2-2.8l7.6 3v9.4l-7.6 3c-2.8 0-6-1-8.2-3z" fill="#bebebe" stroke="#b2b2b2" stroke-width="0.8"/>
<path d="M681.5 149.6l7.6-2v9.4l-7.6 3z" fill="#cbcbcb"/>
<path d="M682.6 150.20000000000002l2.3-0.6v2.2l-2.3 0.6z" fill="#f4f4f4"/>
<path d="M682.6 153.60000000000002l2.3-0.6v2.2l-2.3 0.6z" fill="#f4f4f4"/>
<path d="M682.6 156.9l2.3-0.6v2.2l-2.3 0.6z" fill="#f4f4f4"/>
<path d="M685.9 149.4l2.3-0.6v2.2l-2.3 0.6z" fill="#f4f4f4"/>
<path d="M685.9 152.8l2.3-0.6v2.2l-2.3 0.6z" fill="#f4f4f4"/>
<path d="M685.9 156.1l2.3-0.6v2.2l-2.3 0.6z" fill="#f4f4f4"/>
<path d="M677.2 150.5v5.2h-2 M676 152l1.2-1.5l1.2 1.5" fill="none" stroke="#e6e6e6" stroke-width="0.9"/>
<path d="M706.2 158.4h-2v-13.6h7" fill="none" stroke="#2f2f2f" stroke-width="1.1"/>
<path d="M711 159.8h-4.3v-13.6h6l4 4v1.6 M712.7 146.2v4h4" fill="none" stroke="#2f2f2f" stroke-width="1.1" stroke-linejoin="round"/>
<rect x="709" y="150.4" width="9.6" height="9.6" fill="#fafafa"/>
<path d="M710.0 154.4A3.7 3.7 0 0 1 717.0 153.3 M717.6 150.9v3.1h-3.1 M717.4 155.8A3.7 3.7 0 0 1 710.4 156.9 M709.8 159.3v-3.1h3.1" fill="none" stroke="#22a045" stroke-width="1.25"/>
<line x1="728.5" y1="139.5" x2="728.5" y2="161.5" stroke="#d2d2d2" stroke-width="1"/>
<line x1="743.1" y1="148.5" x2="750.1" y2="148.5" stroke="#2f2f2f" stroke-width="1.1"/>
<path d="M743.4 151.3l3.2 2.5l3.2-2.5" fill="none" stroke="#2f2f2f" stroke-width="1.3"/>
<rect x="9.5" y="176.5" width="203" height="25" rx="4" fill="#ffffff" stroke="#cdd3cf" stroke-width="1"/>
<text x="16.7" y="193.6" font-size="14.3" fill="#242424" textLength="60.6" lengthAdjust="spacingAndGlyphs">Namen v4</text>
<path d="M197 188.3l4.7 4.7l4.7-4.7" fill="none" stroke="#333" stroke-width="1.2"/>
<circle cx="223" cy="185.5" r="1.1" fill="#333"/>
<circle cx="223" cy="189.4" r="1.1" fill="#333"/>
<circle cx="223" cy="193.3" r="1.1" fill="#333"/>
<rect x="233.5" y="176.5" width="85" height="25" rx="4" fill="#ffffff" stroke="#cdd3cf" stroke-width="1"/>
<path d="M240.2 183.7l11.4 11.4 M251.6 183.7l-11.4 11.4" fill="none" stroke="#bdbdbd" stroke-width="1.1"/>
<path d="M262.3 189.8l4.6 4.8l10.6-10.8" fill="none" stroke="#bdbdbd" stroke-width="1.1"/>
<text transform="translate(286.8,193.6) scale(1.05,1)" font-size="18.2" fill="#2a2a2a" font-family="'Liberation Serif',serif" font-style="italic">fx</text>
<path d="M307.3 187.7l4.5 4.5l4.5-4.5" fill="none" stroke="#9a9a9a" stroke-width="1.1"/>
<rect x="323.5" y="176.5" width="1080" height="25" rx="4" fill="#ffffff" stroke="#cdd3cf" stroke-width="1"/>
<rect x="1.5" y="209" width="1380" height="340" fill="#ffffff"/>
<rect x="1.5" y="209" width="1380" height="19.5" fill="#f0f0f0"/>
<rect x="1.5" y="228.5" width="25" height="320" fill="#f0f0f0"/>
<line x1="1.5" y1="228.5" x2="1380" y2="228.5" stroke="#9c9c9c" stroke-width="1"/>
<line x1="26.5" y1="208.5" x2="26.5" y2="548" stroke="#9c9c9c" stroke-width="1"/>
<path d="M22.9 213.5v11.3h-11.5z" fill="#b2b2b2"/>
<text x="67.0" y="222.8" font-size="12" fill="#262626" text-anchor="middle">A</text>
<text x="148.0" y="222.8" font-size="12" fill="#262626" text-anchor="middle">B</text>
<text x="238.5" y="222.8" font-size="12" fill="#262626" text-anchor="middle">C</text>
<text x="390.5" y="222.8" font-size="12" fill="#262626" text-anchor="middle">D</text>
<text x="533.0" y="222.8" font-size="12" fill="#262626" text-anchor="middle">E</text>
<text x="672.5" y="222.8" font-size="12" fill="#262626" text-anchor="middle">F</text>
<text x="814.0" y="222.8" font-size="12" fill="#262626" text-anchor="middle">G</text>
<text x="897.0" y="222.8" font-size="12" fill="#262626" text-anchor="middle">H</text>
<text x="989.5" y="222.8" font-size="12" fill="#262626" text-anchor="middle">I</text>
<text x="1093.0" y="222.8" font-size="12" fill="#262626" text-anchor="middle">J</text>
<text x="1185.5" y="222.8" font-size="12" fill="#262626" text-anchor="middle">K</text>
<text x="1267.0" y="222.8" font-size="12" fill="#262626" text-anchor="middle">L</text>
<text x="1348.1" y="222.8" font-size="12" fill="#262626" text-anchor="middle">M</text>
<line x1="107.5" y1="209" x2="107.5" y2="228" stroke="#b8b8b8" stroke-width="1"/>
<line x1="188.5" y1="209" x2="188.5" y2="228" stroke="#b8b8b8" stroke-width="1"/>
<line x1="288.5" y1="209" x2="288.5" y2="228" stroke="#b8b8b8" stroke-width="1"/>
<line x1="492.5" y1="209" x2="492.5" y2="228" stroke="#b8b8b8" stroke-width="1"/>
<line x1="573.5" y1="209" x2="573.5" y2="228" stroke="#b8b8b8" stroke-width="1"/>
<line x1="771.5" y1="209" x2="771.5" y2="228" stroke="#b8b8b8" stroke-width="1"/>
<line x1="856.5" y1="209" x2="856.5" y2="228" stroke="#b8b8b8" stroke-width="1"/>
<line x1="937.5" y1="209" x2="937.5" y2="228" stroke="#b8b8b8" stroke-width="1"/>
<line x1="1041.5" y1="209" x2="1041.5" y2="228" stroke="#b8b8b8" stroke-width="1"/>
<line x1="1144.5" y1="209" x2="1144.5" y2="228" stroke="#b8b8b8" stroke-width="1"/>
<line x1="1226.5" y1="209" x2="1226.5" y2="228" stroke="#b8b8b8" stroke-width="1"/>
<line x1="1307.5" y1="209" x2="1307.5" y2="228" stroke="#b8b8b8" stroke-width="1"/>
<line x1="1.5" y1="422.5" x2="26.5" y2="422.5" stroke="#c6c6c6" stroke-width="1"/>
<line x1="1.5" y1="442.5" x2="26.5" y2="442.5" stroke="#c6c6c6" stroke-width="1"/>
<line x1="1.5" y1="462.5" x2="26.5" y2="462.5" stroke="#c6c6c6" stroke-width="1"/>
<line x1="1.5" y1="482.5" x2="26.5" y2="482.5" stroke="#c6c6c6" stroke-width="1"/>
<line x1="1.5" y1="502.5" x2="26.5" y2="502.5" stroke="#c6c6c6" stroke-width="1"/>
<line x1="1.5" y1="522.5" x2="26.5" y2="522.5" stroke="#c6c6c6" stroke-width="1"/>
<line x1="1.5" y1="542.5" x2="26.5" y2="542.5" stroke="#c6c6c6" stroke-width="1"/>
<text x="13.7" y="417.4" font-size="12" fill="#262626" text-anchor="middle">1</text>
<text x="13.7" y="437.9" font-size="12" fill="#262626" text-anchor="middle">2</text>
<text x="13.7" y="457.5" font-size="12" fill="#262626" text-anchor="middle">3</text>
<text x="13.7" y="477.5" font-size="12" fill="#262626" text-anchor="middle">4</text>
<text x="13.7" y="497.5" font-size="12" fill="#262626" text-anchor="middle">5</text>
<text x="13.7" y="517.5" font-size="12" fill="#262626" text-anchor="middle">6</text>
<text x="13.7" y="537.5" font-size="12" fill="#262626" text-anchor="middle">7</text>
<g class="tb2">
<rect x="27" y="229" width="320" height="191" fill="#ffffff"/>
<line x1="347.5" y1="229" x2="347.5" y2="421" stroke="#1b6088" stroke-width="1"/>
<line x1="27" y1="420.5" x2="348" y2="420.5" stroke="#1b6088" stroke-width="1"/>
<text x="35.7" y="247.6" font-size="13.8" font-weight="bold" fill="#111111" textLength="35.7" lengthAdjust="spacingAndGlyphs">Name</text>
<line x1="35.3" y1="256.5" x2="339" y2="256.5" stroke="#1d5f86" stroke-width="1.2"/>
<path d="M288.9 237.4l2.1 2l4.7-4.6" fill="none" stroke="#555555" stroke-width="1.1"/>
<line x1="296.5" y1="238.5" x2="304.2" y2="238.5" stroke="#666666" stroke-width="1.1"/>
<path d="M288.9 242.6l2.1 2l4.7-4.6" fill="none" stroke="#555555" stroke-width="1.1"/>
<line x1="296.5" y1="243.7" x2="304.2" y2="243.7" stroke="#666666" stroke-width="1.1"/>
<path d="M288.9 247.7l2.1 2l4.7-4.6" fill="none" stroke="#555555" stroke-width="1.1"/>
<line x1="296.5" y1="248.8" x2="304.2" y2="248.8" stroke="#8a8a8a" stroke-width="1.1"/>
<path d="M319.8 235.4h14.4v2.2l-4.8 4.4l-2 1.5v4.5l-1.9 1.9v-6.9l-5.7-5.4z" fill="#f3f3f3"/>
<path d="M334.2 235.4v2.2l-4.6 4.3 M334.2 235.4h-14.4v2.2l5.7 5.4v7l1-0.9" fill="none" stroke="#b4b4b4" stroke-width="1.2" stroke-linejoin="round"/>
<path d="M327.8 243.1l8 7.5 M335.8 242.6l-8 8" fill="none" stroke="#bcbcbc" stroke-width="1.1"/>
<rect x="35.5" y="262.5" width="91" height="26" rx="2.8" fill="#86cdec" stroke="#8c9296" stroke-width="1"/>
<text x="44.2" y="280.7" font-size="14" fill="#0a0a0a" textLength="38.1" lengthAdjust="spacingAndGlyphs">Abend</text>
<rect x="130.6" y="262.5" width="91" height="26" rx="2.8" fill="#86cdec" stroke="#8c9296" stroke-width="1"/>
<text x="139.3" y="280.7" font-size="14" fill="#0a0a0a" textLength="63.3" lengthAdjust="spacingAndGlyphs">Abendroth</text>
<rect x="225.7" y="262.5" width="91" height="26" rx="2.8" fill="#86cdec" stroke="#8c9296" stroke-width="1"/>
<text x="234.4" y="280.7" font-size="14" fill="#0a0a0a" textLength="19.5" lengthAdjust="spacingAndGlyphs">Abt</text>
<rect x="35.5" y="292.5" width="91" height="26" rx="2.8" fill="#86cdec" stroke="#8c9296" stroke-width="1"/>
<text x="44.2" y="310.7" font-size="14" fill="#0a0a0a" textLength="37.2" lengthAdjust="spacingAndGlyphs">Achen</text>
<rect x="130.6" y="292.5" width="91" height="26" rx="2.8" fill="#86cdec" stroke="#8c9296" stroke-width="1"/>
<text x="139.3" y="310.7" font-size="14" fill="#0a0a0a" textLength="42.2" lengthAdjust="spacingAndGlyphs">Achern</text>
<rect x="225.7" y="292.5" width="91" height="26" rx="2.8" fill="#86cdec" stroke="#8c9296" stroke-width="1"/>
<text x="234.4" y="310.7" font-size="14" fill="#0a0a0a" textLength="60.9" lengthAdjust="spacingAndGlyphs">Ackerman</text>
<rect x="35.5" y="322.5" width="91" height="26" rx="2.8" fill="#86cdec" stroke="#8c9296" stroke-width="1"/>
<text x="44.2" y="340.7" font-size="14" fill="#0a0a0a" textLength="69.4" lengthAdjust="spacingAndGlyphs">Ackermann</text>
<rect x="130.6" y="322.5" width="91" height="26" rx="2.8" fill="#86cdec" stroke="#8c9296" stroke-width="1"/>
<text x="139.3" y="340.7" font-size="14" fill="#0a0a0a" textLength="37.2" lengthAdjust="spacingAndGlyphs">Amsel</text>
<rect x="225.7" y="322.5" width="91" height="26" rx="2.8" fill="#86cdec" stroke="#8c9296" stroke-width="1"/>
<text x="234.4" y="340.7" font-size="14" fill="#0a0a0a" textLength="56.3" lengthAdjust="spacingAndGlyphs">Austerlitz</text>
<rect x="35.5" y="352.5" width="91" height="26" rx="2.8" fill="#86cdec" stroke="#8c9296" stroke-width="1"/>
<text x="44.2" y="370.7" font-size="14" fill="#0a0a0a" textLength="43.7" lengthAdjust="spacingAndGlyphs">Baader</text>
<rect x="130.6" y="352.5" width="91" height="26" rx="2.8" fill="#86cdec" stroke="#8c9296" stroke-width="1"/>
<text x="139.3" y="370.7" font-size="14" fill="#0a0a0a" textLength="29.9" lengthAdjust="spacingAndGlyphs">Bach</text>
<rect x="225.7" y="352.5" width="91" height="26" rx="2.8" fill="#86cdec" stroke="#8c9296" stroke-width="1"/>
<text x="234.4" y="370.7" font-size="14" fill="#0a0a0a" textLength="65.1" lengthAdjust="spacingAndGlyphs">Bachmeier</text>
<rect x="35.5" y="382.5" width="91" height="26" rx="2.8" fill="#86cdec" stroke="#8c9296" stroke-width="1"/>
<text x="44.2" y="400.7" font-size="14" fill="#0a0a0a" textLength="35.2" lengthAdjust="spacingAndGlyphs">Bader</text>
<rect x="130.6" y="382.5" width="91" height="26" rx="2.8" fill="#86cdec" stroke="#8c9296" stroke-width="1"/>
<text x="139.3" y="400.7" font-size="14" fill="#0a0a0a" textLength="27.2" lengthAdjust="spacingAndGlyphs">Baer</text>
<rect x="225.7" y="382.5" width="91" height="26" rx="2.8" fill="#86cdec" stroke="#8c9296" stroke-width="1"/>
<text x="234.4" y="400.7" font-size="14" fill="#0a0a0a" textLength="31.0" lengthAdjust="spacingAndGlyphs">Baier</text>
<rect x="321" y="262" width="18" height="150" fill="#f0f0f0"/>
<rect x="328" y="281" width="4" height="8.8" fill="#7f7f7f"/>
<line x1="349.5" y1="229" x2="349.5" y2="421" stroke="#1b6088" stroke-width="1"/>
<line x1="535.5" y1="229" x2="535.5" y2="421" stroke="#1b6088" stroke-width="1.3"/>
<line x1="349" y1="420.5" x2="536" y2="420.5" stroke="#1b6088" stroke-width="1"/>
<text x="358.4" y="247.6" font-size="13.8" font-weight="bold" fill="#111111" textLength="64.8" lengthAdjust="spacingAndGlyphs">Buchstabe</text>
<line x1="358" y1="256.5" x2="527" y2="256.5" stroke="#1d5f86" stroke-width="1.2"/>
<path d="M476.7 237.4l2.1 2l4.7-4.6" fill="none" stroke="#555555" stroke-width="1.1"/>
<line x1="484.3" y1="238.5" x2="492" y2="238.5" stroke="#666666" stroke-width="1.1"/>
<path d="M476.7 242.6l2.1 2l4.7-4.6" fill="none" stroke="#555555" stroke-width="1.1"/>
<line x1="484.3" y1="243.7" x2="492" y2="243.7" stroke="#666666" stroke-width="1.1"/>
<path d="M476.7 247.7l2.1 2l4.7-4.6" fill="none" stroke="#555555" stroke-width="1.1"/>
<line x1="484.3" y1="248.8" x2="492" y2="248.8" stroke="#8a8a8a" stroke-width="1.1"/>
<path d="M507.6 235.4h14.4v2.2l-4.8 4.4l-2 1.5v4.5l-1.9 1.9v-6.9l-5.7-5.4z" fill="#f3f3f3"/>
<path d="M522.0 235.4v2.2l-4.6 4.3 M522.0 235.4h-14.4v2.2l5.7 5.4v7l1-0.9" fill="none" stroke="#b4b4b4" stroke-width="1.2" stroke-linejoin="round"/>
<path d="M515.6 243.1l8 7.5 M523.6 242.6l-8 8" fill="none" stroke="#bcbcbc" stroke-width="1.1"/>
<rect x="358.5" y="262.5" width="30" height="26" rx="2.8" fill="#86cdec" stroke="#8c9296" stroke-width="1"/>
<text transform="translate(366.7,280.7) scale(0.885,1)" font-size="14" fill="#0a0a0a">A</text>
<rect x="392.7" y="262.5" width="30" height="26" rx="2.8" fill="#86cdec" stroke="#8c9296" stroke-width="1"/>
<text transform="translate(400.9,280.7) scale(0.885,1)" font-size="14" fill="#0a0a0a">B</text>
<rect x="426.9" y="262.5" width="30" height="26" rx="2.8" fill="#86cdec" stroke="#8c9296" stroke-width="1"/>
<text transform="translate(435.1,280.7) scale(0.885,1)" font-size="14" fill="#0a0a0a">C</text>
<rect x="461.1" y="262.5" width="30" height="26" rx="2.8" fill="#86cdec" stroke="#8c9296" stroke-width="1"/>
<text transform="translate(469.3,280.7) scale(0.885,1)" font-size="14" fill="#0a0a0a">D</text>
<rect x="495.3" y="262.5" width="30" height="26" rx="2.8" fill="#86cdec" stroke="#8c9296" stroke-width="1"/>
<text transform="translate(503.5,280.7) scale(0.885,1)" font-size="14" fill="#0a0a0a">E</text>
<rect x="358.5" y="292.5" width="30" height="26" rx="2.8" fill="#86cdec" stroke="#8c9296" stroke-width="1"/>
<text transform="translate(366.7,310.7) scale(0.885,1)" font-size="14" fill="#0a0a0a">F</text>
<rect x="392.7" y="292.5" width="30" height="26" rx="2.8" fill="#86cdec" stroke="#8c9296" stroke-width="1"/>
<text transform="translate(400.9,310.7) scale(0.885,1)" font-size="14" fill="#0a0a0a">G</text>
<rect x="426.9" y="292.5" width="30" height="26" rx="2.8" fill="#86cdec" stroke="#8c9296" stroke-width="1"/>
<text transform="translate(435.1,310.7) scale(0.885,1)" font-size="14" fill="#0a0a0a">H</text>
<rect x="461.1" y="292.5" width="30" height="26" rx="2.8" fill="#86cdec" stroke="#8c9296" stroke-width="1"/>
<text transform="translate(469.3,310.7) scale(0.885,1)" font-size="14" fill="#0a0a0a">J</text>
<rect x="495.3" y="292.5" width="30" height="26" rx="2.8" fill="#86cdec" stroke="#8c9296" stroke-width="1"/>
<text transform="translate(503.5,310.7) scale(0.885,1)" font-size="14" fill="#0a0a0a">K</text>
<rect x="358.5" y="322.5" width="30" height="26" rx="2.8" fill="#86cdec" stroke="#8c9296" stroke-width="1"/>
<text transform="translate(366.7,340.7) scale(0.885,1)" font-size="14" fill="#0a0a0a">L</text>
<rect x="392.7" y="322.5" width="30" height="26" rx="2.8" fill="#86cdec" stroke="#8c9296" stroke-width="1"/>
<text transform="translate(400.9,340.7) scale(0.885,1)" font-size="14" fill="#0a0a0a">M</text>
<rect x="426.9" y="322.5" width="30" height="26" rx="2.8" fill="#86cdec" stroke="#8c9296" stroke-width="1"/>
<text transform="translate(435.1,340.7) scale(0.885,1)" font-size="14" fill="#0a0a0a">N</text>
<rect x="461.1" y="322.5" width="30" height="26" rx="2.8" fill="#86cdec" stroke="#8c9296" stroke-width="1"/>
<text transform="translate(469.3,340.7) scale(0.885,1)" font-size="14" fill="#0a0a0a">O</text>
<rect x="495.3" y="322.5" width="30" height="26" rx="2.8" fill="#86cdec" stroke="#8c9296" stroke-width="1"/>
<text transform="translate(503.5,340.7) scale(0.885,1)" font-size="14" fill="#0a0a0a">P</text>
<rect x="358.5" y="352.5" width="30" height="26" rx="2.8" fill="#86cdec" stroke="#8c9296" stroke-width="1"/>
<text transform="translate(366.7,370.7) scale(0.885,1)" font-size="14" fill="#0a0a0a">R</text>
<rect x="392.7" y="352.5" width="30" height="26" rx="2.8" fill="#86cdec" stroke="#8c9296" stroke-width="1"/>
<text transform="translate(400.9,370.7) scale(0.885,1)" font-size="14" fill="#0a0a0a">S</text>
<rect x="426.9" y="352.5" width="30" height="26" rx="2.8" fill="#86cdec" stroke="#8c9296" stroke-width="1"/>
<text transform="translate(435.1,370.7) scale(0.885,1)" font-size="14" fill="#0a0a0a">T</text>
<rect x="461.1" y="352.5" width="30" height="26" rx="2.8" fill="#86cdec" stroke="#8c9296" stroke-width="1"/>
<text transform="translate(469.3,370.7) scale(0.885,1)" font-size="14" fill="#0a0a0a">U</text>
<rect x="495.3" y="352.5" width="30" height="26" rx="2.8" fill="#86cdec" stroke="#8c9296" stroke-width="1"/>
<text transform="translate(503.5,370.7) scale(0.885,1)" font-size="14" fill="#0a0a0a">V</text>
<rect x="358.5" y="382.5" width="30" height="26" rx="2.8" fill="#86cdec" stroke="#8c9296" stroke-width="1"/>
<text transform="translate(366.7,400.7) scale(0.885,1)" font-size="14" fill="#0a0a0a">W</text>
<rect x="392.7" y="382.5" width="30" height="26" rx="2.8" fill="#86cdec" stroke="#8c9296" stroke-width="1"/>
<text transform="translate(400.9,400.7) scale(0.885,1)" font-size="14" fill="#0a0a0a">Z</text>
<line x1="540.5" y1="229" x2="540.5" y2="421" stroke="#1b6088" stroke-width="1.3"/>
<line x1="857.8" y1="229" x2="857.8" y2="421" stroke="#1b6088" stroke-width="1.4"/>
<line x1="540" y1="420.5" x2="858" y2="420.5" stroke="#1b6088" stroke-width="1"/>
<text x="549.4" y="247.6" font-size="13.8" font-weight="bold" fill="#111111" textLength="81.7" lengthAdjust="spacingAndGlyphs">Buchstabe v2</text>
<line x1="549" y1="256.5" x2="849" y2="256.5" stroke="#1d5f86" stroke-width="1.2"/>
<path d="M798.6 237.4l2.1 2l4.7-4.6" fill="none" stroke="#555555" stroke-width="1.1"/>
<line x1="806.2" y1="238.5" x2="813.9" y2="238.5" stroke="#666666" stroke-width="1.1"/>
<path d="M798.6 242.6l2.1 2l4.7-4.6" fill="none" stroke="#555555" stroke-width="1.1"/>
<line x1="806.2" y1="243.7" x2="813.9" y2="243.7" stroke="#666666" stroke-width="1.1"/>
<path d="M798.6 247.7l2.1 2l4.7-4.6" fill="none" stroke="#555555" stroke-width="1.1"/>
<line x1="806.2" y1="248.8" x2="813.9" y2="248.8" stroke="#8a8a8a" stroke-width="1.1"/>
<path d="M829.5 235.4h14.4v2.2l-4.8 4.4l-2 1.5v4.5l-1.9 1.9v-6.9l-5.7-5.4z" fill="#f3f3f3"/>
<path d="M843.9 235.4v2.2l-4.6 4.3 M843.9 235.4h-14.4v2.2l5.7 5.4v7l1-0.9" fill="none" stroke="#b4b4b4" stroke-width="1.2" stroke-linejoin="round"/>
<path d="M837.5 243.1l8 7.5 M845.5 242.6l-8 8" fill="none" stroke="#bcbcbc" stroke-width="1.1"/>
<rect x="549.5" y="262.5" width="56" height="26" rx="2.8" fill="#86cdec" stroke="#8c9296" stroke-width="1"/>
<text transform="translate(558.5,280.7) scale(0.9,1)" font-size="14" fill="#0a0a0a">A (19)</text>
<rect x="609.7" y="262.5" width="56" height="26" rx="2.8" fill="#86cdec" stroke="#8c9296" stroke-width="1"/>
<text transform="translate(618.7,280.7) scale(0.9,1)" font-size="14" fill="#0a0a0a">B (47)</text>
<rect x="669.9" y="262.5" width="56" height="26" rx="2.8" fill="#86cdec" stroke="#8c9296" stroke-width="1"/>
<text transform="translate(678.9,280.7) scale(0.9,1)" font-size="14" fill="#0a0a0a">C (4)</text>
<rect x="730.1" y="262.5" width="56" height="26" rx="2.8" fill="#86cdec" stroke="#8c9296" stroke-width="1"/>
<text transform="translate(739.1,280.7) scale(0.9,1)" font-size="14" fill="#0a0a0a">D (19)</text>
<rect x="790.3" y="262.5" width="56" height="26" rx="2.8" fill="#86cdec" stroke="#8c9296" stroke-width="1"/>
<text transform="translate(799.3,280.7) scale(0.9,1)" font-size="14" fill="#0a0a0a">E (24)</text>
<rect x="549.5" y="292.5" width="56" height="26" rx="2.8" fill="#86cdec" stroke="#8c9296" stroke-width="1"/>
<text transform="translate(558.5,310.7) scale(0.9,1)" font-size="14" fill="#0a0a0a">F (56)</text>
<rect x="609.7" y="292.5" width="56" height="26" rx="2.8" fill="#86cdec" stroke="#8c9296" stroke-width="1"/>
<text transform="translate(618.7,310.7) scale(0.9,1)" font-size="14" fill="#0a0a0a">G (25)</text>
<rect x="669.9" y="292.5" width="56" height="26" rx="2.8" fill="#86cdec" stroke="#8c9296" stroke-width="1"/>
<text transform="translate(678.9,310.7) scale(0.9,1)" font-size="14" fill="#0a0a0a">H (31)</text>
<rect x="730.1" y="292.5" width="56" height="26" rx="2.8" fill="#86cdec" stroke="#8c9296" stroke-width="1"/>
<text transform="translate(739.1,310.7) scale(0.9,1)" font-size="14" fill="#0a0a0a">J (10)</text>
<rect x="790.3" y="292.5" width="56" height="26" rx="2.8" fill="#86cdec" stroke="#8c9296" stroke-width="1"/>
<text transform="translate(799.3,310.7) scale(0.9,1)" font-size="14" fill="#0a0a0a">K (47)</text>
<rect x="549.5" y="322.5" width="56" height="26" rx="2.8" fill="#86cdec" stroke="#8c9296" stroke-width="1"/>
<text transform="translate(558.5,340.7) scale(0.9,1)" font-size="14" fill="#0a0a0a">L (13)</text>
<rect x="609.7" y="322.5" width="56" height="26" rx="2.8" fill="#86cdec" stroke="#8c9296" stroke-width="1"/>
<text transform="translate(618.7,340.7) scale(0.9,1)" font-size="14" fill="#0a0a0a">M (27)</text>
<rect x="669.9" y="322.5" width="56" height="26" rx="2.8" fill="#86cdec" stroke="#8c9296" stroke-width="1"/>
<text transform="translate(678.9,340.7) scale(0.9,1)" font-size="14" fill="#0a0a0a">N (10)</text>
<rect x="730.1" y="322.5" width="56" height="26" rx="2.8" fill="#86cdec" stroke="#8c9296" stroke-width="1"/>
<text transform="translate(739.1,340.7) scale(0.9,1)" font-size="14" fill="#0a0a0a">O (6)</text>
<rect x="790.3" y="322.5" width="56" height="26" rx="2.8" fill="#86cdec" stroke="#8c9296" stroke-width="1"/>
<text transform="translate(799.3,340.7) scale(0.9,1)" font-size="14" fill="#0a0a0a">P (18)</text>
<rect x="549.5" y="352.5" width="56" height="26" rx="2.8" fill="#86cdec" stroke="#8c9296" stroke-width="1"/>
<text transform="translate(558.5,370.7) scale(0.9,1)" font-size="14" fill="#0a0a0a">R (15)</text>
<rect x="609.7" y="352.5" width="56" height="26" rx="2.8" fill="#86cdec" stroke="#8c9296" stroke-width="1"/>
<text transform="translate(618.7,370.7) scale(0.9,1)" font-size="14" fill="#0a0a0a">S (55)</text>
<rect x="669.9" y="352.5" width="56" height="26" rx="2.8" fill="#86cdec" stroke="#8c9296" stroke-width="1"/>
<text transform="translate(678.9,370.7) scale(0.9,1)" font-size="14" fill="#0a0a0a">T (12)</text>
<rect x="730.1" y="352.5" width="56" height="26" rx="2.8" fill="#86cdec" stroke="#8c9296" stroke-width="1"/>
<text transform="translate(739.1,370.7) scale(0.9,1)" font-size="14" fill="#0a0a0a">U (4)</text>
<rect x="790.3" y="352.5" width="56" height="26" rx="2.8" fill="#86cdec" stroke="#8c9296" stroke-width="1"/>
<text transform="translate(799.3,370.7) scale(0.9,1)" font-size="14" fill="#0a0a0a">V (6)</text>
<rect x="549.5" y="382.5" width="56" height="26" rx="2.8" fill="#86cdec" stroke="#8c9296" stroke-width="1"/>
<text transform="translate(558.5,400.7) scale(0.9,1)" font-size="14" fill="#0a0a0a">W (43)</text>
<rect x="609.7" y="382.5" width="56" height="26" rx="2.8" fill="#86cdec" stroke="#8c9296" stroke-width="1"/>
<text transform="translate(618.7,400.7) scale(0.9,1)" font-size="14" fill="#0a0a0a">Z (9)</text>
<text x="868.6" y="247.6" font-size="13.8" font-weight="bold" fill="#111111" textLength="81.9" lengthAdjust="spacingAndGlyphs">Buchstabe v3</text>
<line x1="868.2" y1="256.5" x2="1361" y2="256.5" stroke="#1d5f86" stroke-width="1.2"/>
<path d="M1311.2 237.4l2.1 2l4.7-4.6" fill="none" stroke="#555555" stroke-width="1.1"/>
<line x1="1318.8" y1="238.5" x2="1326.5" y2="238.5" stroke="#666666" stroke-width="1.1"/>
<path d="M1311.2 242.6l2.1 2l4.7-4.6" fill="none" stroke="#555555" stroke-width="1.1"/>
<line x1="1318.8" y1="243.7" x2="1326.5" y2="243.7" stroke="#666666" stroke-width="1.1"/>
<path d="M1311.2 247.7l2.1 2l4.7-4.6" fill="none" stroke="#555555" stroke-width="1.1"/>
<line x1="1318.8" y1="248.8" x2="1326.5" y2="248.8" stroke="#8a8a8a" stroke-width="1.1"/>
<path d="M1342.1 235.4h14.4v2.2l-4.8 4.4l-2 1.5v4.5l-1.9 1.9v-6.9l-5.7-5.4z" fill="#f3f3f3"/>
<path d="M1356.5 235.4v2.2l-4.6 4.3 M1356.5 235.4h-14.4v2.2l5.7 5.4v7l1-0.9" fill="none" stroke="#b4b4b4" stroke-width="1.2" stroke-linejoin="round"/>
<path d="M1350.1 243.1l8 7.5 M1358.1 242.6l-8 8" fill="none" stroke="#bcbcbc" stroke-width="1.1"/>
<rect x="868.5" y="262.5" width="95" height="26" rx="2.8" fill="#86cdec" stroke="#8c9296" stroke-width="1"/>
<text transform="translate(876.9,280.9) scale(0.88,1)" font-size="14.3" fill="#0a0a0a">A</text>
<path transform="translate(891.1,268.8) scale(1.0)" d="M6.6 0C8.6 0 10.4 1 10.4 3.4L10.4 4.3C11 4.3 11.2 4.7 11.1 5.2C11 5.7 10.7 5.8 10.4 5.8C10.2 7 9.6 8 8.8 8.7C8.8 9.2 9 9.5 9.6 9.8C11.5 10.5 12.8 11.6 13.2 13.8L0 13.8C0.4 11.6 1.7 10.5 3.6 9.8C4.2 9.5 4.4 9.2 4.4 8.7C3.6 8 3 7 2.8 5.8C2.5 5.8 2.2 5.7 2.1 5.2C2 4.7 2.2 4.3 2.8 4.3L2.8 3.4C2.8 1 4.6 0 6.6 0Z" fill="#000000"/>
<path transform="translate(912.1,268.8) scale(1.0)" d="M6.6 0C8.6 0 10.4 1 10.4 3.4L10.4 4.3C11 4.3 11.2 4.7 11.1 5.2C11 5.7 10.7 5.8 10.4 5.8C10.2 7 9.6 8 8.8 8.7C8.8 9.2 9 9.5 9.6 9.8C11.5 10.5 12.8 11.6 13.2 13.8L0 13.8C0.4 11.6 1.7 10.5 3.6 9.8C4.2 9.5 4.4 9.2 4.4 8.7C3.6 8 3 7 2.8 5.8C2.5 5.8 2.2 5.7 2.1 5.2C2 4.7 2.2 4.3 2.8 4.3L2.8 3.4C2.8 1 4.6 0 6.6 0Z" fill="#000000"/>
<rect x="967.6" y="262.5" width="95" height="26" rx="2.8" fill="#86cdec" stroke="#8c9296" stroke-width="1"/>
<text transform="translate(976.0,280.9) scale(0.88,1)" font-size="14.3" fill="#0a0a0a">B</text>
<path transform="translate(989.7,268.8) scale(1.0)" d="M6.6 0C8.6 0 10.4 1 10.4 3.4L10.4 4.3C11 4.3 11.2 4.7 11.1 5.2C11 5.7 10.7 5.8 10.4 5.8C10.2 7 9.6 8 8.8 8.7C8.8 9.2 9 9.5 9.6 9.8C11.5 10.5 12.8 11.6 13.2 13.8L0 13.8C0.4 11.6 1.7 10.5 3.6 9.8C4.2 9.5 4.4 9.2 4.4 8.7C3.6 8 3 7 2.8 5.8C2.5 5.8 2.2 5.7 2.1 5.2C2 4.7 2.2 4.3 2.8 4.3L2.8 3.4C2.8 1 4.6 0 6.6 0Z" fill="#000000"/>
<path transform="translate(1010.7,268.8) scale(1.0)" d="M6.6 0C8.6 0 10.4 1 10.4 3.4L10.4 4.3C11 4.3 11.2 4.7 11.1 5.2C11 5.7 10.7 5.8 10.4 5.8C10.2 7 9.6 8 8.8 8.7C8.8 9.2 9 9.5 9.6 9.8C11.5 10.5 12.8 11.6 13.2 13.8L0 13.8C0.4 11.6 1.7 10.5 3.6 9.8C4.2 9.5 4.4 9.2 4.4 8.7C3.6 8 3 7 2.8 5.8C2.5 5.8 2.2 5.7 2.1 5.2C2 4.7 2.2 4.3 2.8 4.3L2.8 3.4C2.8 1 4.6 0 6.6 0Z" fill="#000000"/>
<path transform="translate(1031.7,268.8) scale(1.0)" d="M6.6 0C8.6 0 10.4 1 10.4 3.4L10.4 4.3C11 4.3 11.2 4.7 11.1 5.2C11 5.7 10.7 5.8 10.4 5.8C10.2 7 9.6 8 8.8 8.7C8.8 9.2 9 9.5 9.6 9.8C11.5 10.5 12.8 11.6 13.2 13.8L0 13.8C0.4 11.6 1.7 10.5 3.6 9.8C4.2 9.5 4.4 9.2 4.4 8.7C3.6 8 3 7 2.8 5.8C2.5 5.8 2.2 5.7 2.1 5.2C2 4.7 2.2 4.3 2.8 4.3L2.8 3.4C2.8 1 4.6 0 6.6 0Z" fill="#000000"/>
<rect x="1066.7" y="262.5" width="95" height="26" rx="2.8" fill="#86cdec" stroke="#8c9296" stroke-width="1"/>
<text transform="translate(1075.1,280.9) scale(0.88,1)" font-size="14.3" fill="#0a0a0a">C</text>
<path transform="translate(1088.7,268.8) scale(1.0)" d="M6.6 0C8.6 0 10.4 1 10.4 3.4L10.4 4.3C11 4.3 11.2 4.7 11.1 5.2C11 5.7 10.7 5.8 10.4 5.8C10.2 7 9.6 8 8.8 8.7C8.8 9.2 9 9.5 9.6 9.8C11.5 10.5 12.8 11.6 13.2 13.8L0 13.8C0.4 11.6 1.7 10.5 3.6 9.8C4.2 9.5 4.4 9.2 4.4 8.7C3.6 8 3 7 2.8 5.8C2.5 5.8 2.2 5.7 2.1 5.2C2 4.7 2.2 4.3 2.8 4.3L2.8 3.4C2.8 1 4.6 0 6.6 0Z" fill="#000000"/>
<rect x="1165.8" y="262.5" width="95" height="26" rx="2.8" fill="#86cdec" stroke="#8c9296" stroke-width="1"/>
<text transform="translate(1174.2,280.9) scale(0.88,1)" font-size="14.3" fill="#0a0a0a">D</text>
<path transform="translate(1188.6,268.8) scale(1.0)" d="M6.6 0C8.6 0 10.4 1 10.4 3.4L10.4 4.3C11 4.3 11.2 4.7 11.1 5.2C11 5.7 10.7 5.8 10.4 5.8C10.2 7 9.6 8 8.8 8.7C8.8 9.2 9 9.5 9.6 9.8C11.5 10.5 12.8 11.6 13.2 13.8L0 13.8C0.4 11.6 1.7 10.5 3.6 9.8C4.2 9.5 4.4 9.2 4.4 8.7C3.6 8 3 7 2.8 5.8C2.5 5.8 2.2 5.7 2.1 5.2C2 4.7 2.2 4.3 2.8 4.3L2.8 3.4C2.8 1 4.6 0 6.6 0Z" fill="#000000"/>
<path transform="translate(1209.6,268.8) scale(1.0)" d="M6.6 0C8.6 0 10.4 1 10.4 3.4L10.4 4.3C11 4.3 11.2 4.7 11.1 5.2C11 5.7 10.7 5.8 10.4 5.8C10.2 7 9.6 8 8.8 8.7C8.8 9.2 9 9.5 9.6 9.8C11.5 10.5 12.8 11.6 13.2 13.8L0 13.8C0.4 11.6 1.7 10.5 3.6 9.8C4.2 9.5 4.4 9.2 4.4 8.7C3.6 8 3 7 2.8 5.8C2.5 5.8 2.2 5.7 2.1 5.2C2 4.7 2.2 4.3 2.8 4.3L2.8 3.4C2.8 1 4.6 0 6.6 0Z" fill="#000000"/>
<rect x="1264.9" y="262.5" width="95" height="26" rx="2.8" fill="#86cdec" stroke="#8c9296" stroke-width="1"/>
<text transform="translate(1273.3,280.9) scale(0.88,1)" font-size="14.3" fill="#0a0a0a">E</text>
<path transform="translate(1285.7,268.8) scale(1.0)" d="M6.6 0C8.6 0 10.4 1 10.4 3.4L10.4 4.3C11 4.3 11.2 4.7 11.1 5.2C11 5.7 10.7 5.8 10.4 5.8C10.2 7 9.6 8 8.8 8.7C8.8 9.2 9 9.5 9.6 9.8C11.5 10.5 12.8 11.6 13.2 13.8L0 13.8C0.4 11.6 1.7 10.5 3.6 9.8C4.2 9.5 4.4 9.2 4.4 8.7C3.6 8 3 7 2.8 5.8C2.5 5.8 2.2 5.7 2.1 5.2C2 4.7 2.2 4.3 2.8 4.3L2.8 3.4C2.8 1 4.6 0 6.6 0Z" fill="#000000"/>
<path transform="translate(1306.7,268.8) scale(1.0)" d="M6.6 0C8.6 0 10.4 1 10.4 3.4L10.4 4.3C11 4.3 11.2 4.7 11.1 5.2C11 5.7 10.7 5.8 10.4 5.8C10.2 7 9.6 8 8.8 8.7C8.8 9.2 9 9.5 9.6 9.8C11.5 10.5 12.8 11.6 13.2 13.8L0 13.8C0.4 11.6 1.7 10.5 3.6 9.8C4.2 9.5 4.4 9.2 4.4 8.7C3.6 8 3 7 2.8 5.8C2.5 5.8 2.2 5.7 2.1 5.2C2 4.7 2.2 4.3 2.8 4.3L2.8 3.4C2.8 1 4.6 0 6.6 0Z" fill="#000000"/>
<path transform="translate(1327.7,268.8) scale(1.0)" d="M6.6 0C8.6 0 10.4 1 10.4 3.4L10.4 4.3C11 4.3 11.2 4.7 11.1 5.2C11 5.7 10.7 5.8 10.4 5.8C10.2 7 9.6 8 8.8 8.7C8.8 9.2 9 9.5 9.6 9.8C11.5 10.5 12.8 11.6 13.2 13.8L0 13.8C0.4 11.6 1.7 10.5 3.6 9.8C4.2 9.5 4.4 9.2 4.4 8.7C3.6 8 3 7 2.8 5.8C2.5 5.8 2.2 5.7 2.1 5.2C2 4.7 2.2 4.3 2.8 4.3L2.8 3.4C2.8 1 4.6 0 6.6 0Z" fill="#000000"/>
<rect x="868.5" y="292.5" width="95" height="26" rx="2.8" fill="#86cdec" stroke="#8c9296" stroke-width="1"/>
<text transform="translate(876.9,310.9) scale(0.88,1)" font-size="14.3" fill="#0a0a0a">F</text>
<path transform="translate(890.2,298.8) scale(1.0)" d="M6.6 0C8.6 0 10.4 1 10.4 3.4L10.4 4.3C11 4.3 11.2 4.7 11.1 5.2C11 5.7 10.7 5.8 10.4 5.8C10.2 7 9.6 8 8.8 8.7C8.8 9.2 9 9.5 9.6 9.8C11.5 10.5 12.8 11.6 13.2 13.8L0 13.8C0.4 11.6 1.7 10.5 3.6 9.8C4.2 9.5 4.4 9.2 4.4 8.7C3.6 8 3 7 2.8 5.8C2.5 5.8 2.2 5.7 2.1 5.2C2 4.7 2.2 4.3 2.8 4.3L2.8 3.4C2.8 1 4.6 0 6.6 0Z" fill="#000000"/>
<path transform="translate(911.2,298.8) scale(1.0)" d="M6.6 0C8.6 0 10.4 1 10.4 3.4L10.4 4.3C11 4.3 11.2 4.7 11.1 5.2C11 5.7 10.7 5.8 10.4 5.8C10.2 7 9.6 8 8.8 8.7C8.8 9.2 9 9.5 9.6 9.8C11.5 10.5 12.8 11.6 13.2 13.8L0 13.8C0.4 11.6 1.7 10.5 3.6 9.8C4.2 9.5 4.4 9.2 4.4 8.7C3.6 8 3 7 2.8 5.8C2.5 5.8 2.2 5.7 2.1 5.2C2 4.7 2.2 4.3 2.8 4.3L2.8 3.4C2.8 1 4.6 0 6.6 0Z" fill="#000000"/>
<path transform="translate(932.2,298.8) scale(1.0)" d="M6.6 0C8.6 0 10.4 1 10.4 3.4L10.4 4.3C11 4.3 11.2 4.7 11.1 5.2C11 5.7 10.7 5.8 10.4 5.8C10.2 7 9.6 8 8.8 8.7C8.8 9.2 9 9.5 9.6 9.8C11.5 10.5 12.8 11.6 13.2 13.8L0 13.8C0.4 11.6 1.7 10.5 3.6 9.8C4.2 9.5 4.4 9.2 4.4 8.7C3.6 8 3 7 2.8 5.8C2.5 5.8 2.2 5.7 2.1 5.2C2 4.7 2.2 4.3 2.8 4.3L2.8 3.4C2.8 1 4.6 0 6.6 0Z" fill="#000000"/>
<rect x="967.6" y="292.5" width="95" height="26" rx="2.8" fill="#86cdec" stroke="#8c9296" stroke-width="1"/>
<text transform="translate(976.0,310.9) scale(0.88,1)" font-size="14.3" fill="#0a0a0a">G</text>
<path transform="translate(990.4,298.8) scale(1.0)" d="M6.6 0C8.6 0 10.4 1 10.4 3.4L10.4 4.3C11 4.3 11.2 4.7 11.1 5.2C11 5.7 10.7 5.8 10.4 5.8C10.2 7 9.6 8 8.8 8.7C8.8 9.2 9 9.5 9.6 9.8C11.5 10.5 12.8 11.6 13.2 13.8L0 13.8C0.4 11.6 1.7 10.5 3.6 9.8C4.2 9.5 4.4 9.2 4.4 8.7C3.6 8 3 7 2.8 5.8C2.5 5.8 2.2 5.7 2.1 5.2C2 4.7 2.2 4.3 2.8 4.3L2.8 3.4C2.8 1 4.6 0 6.6 0Z" fill="#000000"/>
<path transform="translate(1011.4,298.8) scale(1.0)" d="M6.6 0C8.6 0 10.4 1 10.4 3.4L10.4 4.3C11 4.3 11.2 4.7 11.1 5.2C11 5.7 10.7 5.8 10.4 5.8C10.2 7 9.6 8 8.8 8.7C8.8 9.2 9 9.5 9.6 9.8C11.5 10.5 12.8 11.6 13.2 13.8L0 13.8C0.4 11.6 1.7 10.5 3.6 9.8C4.2 9.5 4.4 9.2 4.4 8.7C3.6 8 3 7 2.8 5.8C2.5 5.8 2.2 5.7 2.1 5.2C2 4.7 2.2 4.3 2.8 4.3L2.8 3.4C2.8 1 4.6 0 6.6 0Z" fill="#000000"/>
<path transform="translate(1032.4,298.8) scale(1.0)" d="M6.6 0C8.6 0 10.4 1 10.4 3.4L10.4 4.3C11 4.3 11.2 4.7 11.1 5.2C11 5.7 10.7 5.8 10.4 5.8C10.2 7 9.6 8 8.8 8.7C8.8 9.2 9 9.5 9.6 9.8C11.5 10.5 12.8 11.6 13.2 13.8L0 13.8C0.4 11.6 1.7 10.5 3.6 9.8C4.2 9.5 4.4 9.2 4.4 8.7C3.6 8 3 7 2.8 5.8C2.5 5.8 2.2 5.7 2.1 5.2C2 4.7 2.2 4.3 2.8 4.3L2.8 3.4C2.8 1 4.6 0 6.6 0Z" fill="#000000"/>
<rect x="1066.7" y="292.5" width="95" height="26" rx="2.8" fill="#86cdec" stroke="#8c9296" stroke-width="1"/>
<text transform="translate(1075.1,310.9) scale(0.88,1)" font-size="14.3" fill="#0a0a0a">H</text>
<path transform="translate(1089.5,298.8) scale(1.0)" d="M6.6 0C8.6 0 10.4 1 10.4 3.4L10.4 4.3C11 4.3 11.2 4.7 11.1 5.2C11 5.7 10.7 5.8 10.4 5.8C10.2 7 9.6 8 8.8 8.7C8.8 9.2 9 9.5 9.6 9.8C11.5 10.5 12.8 11.6 13.2 13.8L0 13.8C0.4 11.6 1.7 10.5 3.6 9.8C4.2 9.5 4.4 9.2 4.4 8.7C3.6 8 3 7 2.8 5.8C2.5 5.8 2.2 5.7 2.1 5.2C2 4.7 2.2 4.3 2.8 4.3L2.8 3.4C2.8 1 4.6 0 6.6 0Z" fill="#000000"/>
<path transform="translate(1110.5,298.8) scale(1.0)" d="M6.6 0C8.6 0 10.4 1 10.4 3.4L10.4 4.3C11 4.3 11.2 4.7 11.1 5.2C11 5.7 10.7 5.8 10.4 5.8C10.2 7 9.6 8 8.8 8.7C8.8 9.2 9 9.5 9.6 9.8C11.5 10.5 12.8 11.6 13.2 13.8L0 13.8C0.4 11.6 1.7 10.5 3.6 9.8C4.2 9.5 4.4 9.2 4.4 8.7C3.6 8 3 7 2.8 5.8C2.5 5.8 2.2 5.7 2.1 5.2C2 4.7 2.2 4.3 2.8 4.3L2.8 3.4C2.8 1 4.6 0 6.6 0Z" fill="#000000"/>
<path transform="translate(1131.5,298.8) scale(1.0)" d="M6.6 0C8.6 0 10.4 1 10.4 3.4L10.4 4.3C11 4.3 11.2 4.7 11.1 5.2C11 5.7 10.7 5.8 10.4 5.8C10.2 7 9.6 8 8.8 8.7C8.8 9.2 9 9.5 9.6 9.8C11.5 10.5 12.8 11.6 13.2 13.8L0 13.8C0.4 11.6 1.7 10.5 3.6 9.8C4.2 9.5 4.4 9.2 4.4 8.7C3.6 8 3 7 2.8 5.8C2.5 5.8 2.2 5.7 2.1 5.2C2 4.7 2.2 4.3 2.8 4.3L2.8 3.4C2.8 1 4.6 0 6.6 0Z" fill="#000000"/>
<rect x="1165.8" y="292.5" width="95" height="26" rx="2.8" fill="#86cdec" stroke="#8c9296" stroke-width="1"/>
<text transform="translate(1174.2,310.9) scale(0.88,1)" font-size="14.3" fill="#0a0a0a">J</text>
<path transform="translate(1185.3,298.8) scale(1.0)" d="M6.6 0C8.6 0 10.4 1 10.4 3.4L10.4 4.3C11 4.3 11.2 4.7 11.1 5.2C11 5.7 10.7 5.8 10.4 5.8C10.2 7 9.6 8 8.8 8.7C8.8 9.2 9 9.5 9.6 9.8C11.5 10.5 12.8 11.6 13.2 13.8L0 13.8C0.4 11.6 1.7 10.5 3.6 9.8C4.2 9.5 4.4 9.2 4.4 8.7C3.6 8 3 7 2.8 5.8C2.5 5.8 2.2 5.7 2.1 5.2C2 4.7 2.2 4.3 2.8 4.3L2.8 3.4C2.8 1 4.6 0 6.6 0Z" fill="#000000"/>
<path transform="translate(1206.3,298.8) scale(1.0)" d="M6.6 0C8.6 0 10.4 1 10.4 3.4L10.4 4.3C11 4.3 11.2 4.7 11.1 5.2C11 5.7 10.7 5.8 10.4 5.8C10.2 7 9.6 8 8.8 8.7C8.8 9.2 9 9.5 9.6 9.8C11.5 10.5 12.8 11.6 13.2 13.8L0 13.8C0.4 11.6 1.7 10.5 3.6 9.8C4.2 9.5 4.4 9.2 4.4 8.7C3.6 8 3 7 2.8 5.8C2.5 5.8 2.2 5.7 2.1 5.2C2 4.7 2.2 4.3 2.8 4.3L2.8 3.4C2.8 1 4.6 0 6.6 0Z" fill="#000000"/>
<rect x="1264.9" y="292.5" width="95" height="26" rx="2.8" fill="#86cdec" stroke="#8c9296" stroke-width="1"/>
<text transform="translate(1273.3,310.9) scale(0.88,1)" font-size="14.3" fill="#0a0a0a">K</text>
<path transform="translate(1287.0,298.8) scale(1.0)" d="M6.6 0C8.6 0 10.4 1 10.4 3.4L10.4 4.3C11 4.3 11.2 4.7 11.1 5.2C11 5.7 10.7 5.8 10.4 5.8C10.2 7 9.6 8 8.8 8.7C8.8 9.2 9 9.5 9.6 9.8C11.5 10.5 12.8 11.6 13.2 13.8L0 13.8C0.4 11.6 1.7 10.5 3.6 9.8C4.2 9.5 4.4 9.2 4.4 8.7C3.6 8 3 7 2.8 5.8C2.5 5.8 2.2 5.7 2.1 5.2C2 4.7 2.2 4.3 2.8 4.3L2.8 3.4C2.8 1 4.6 0 6.6 0Z" fill="#000000"/>
<path transform="translate(1308.0,298.8) scale(1.0)" d="M6.6 0C8.6 0 10.4 1 10.4 3.4L10.4 4.3C11 4.3 11.2 4.7 11.1 5.2C11 5.7 10.7 5.8 10.4 5.8C10.2 7 9.6 8 8.8 8.7C8.8 9.2 9 9.5 9.6 9.8C11.5 10.5 12.8 11.6 13.2 13.8L0 13.8C0.4 11.6 1.7 10.5 3.6 9.8C4.2 9.5 4.4 9.2 4.4 8.7C3.6 8 3 7 2.8 5.8C2.5 5.8 2.2 5.7 2.1 5.2C2 4.7 2.2 4.3 2.8 4.3L2.8 3.4C2.8 1 4.6 0 6.6 0Z" fill="#000000"/>
<path transform="translate(1329.0,298.8) scale(1.0)" d="M6.6 0C8.6 0 10.4 1 10.4 3.4L10.4 4.3C11 4.3 11.2 4.7 11.1 5.2C11 5.7 10.7 5.8 10.4 5.8C10.2 7 9.6 8 8.8 8.7C8.8 9.2 9 9.5 9.6 9.8C11.5 10.5 12.8 11.6 13.2 13.8L0 13.8C0.4 11.6 1.7 10.5 3.6 9.8C4.2 9.5 4.4 9.2 4.4 8.7C3.6 8 3 7 2.8 5.8C2.5 5.8 2.2 5.7 2.1 5.2C2 4.7 2.2 4.3 2.8 4.3L2.8 3.4C2.8 1 4.6 0 6.6 0Z" fill="#000000"/>
<rect x="868.5" y="322.5" width="95" height="26" rx="2.8" fill="#86cdec" stroke="#8c9296" stroke-width="1"/>
<text transform="translate(876.9,340.9) scale(0.88,1)" font-size="14.3" fill="#0a0a0a">L</text>
<path transform="translate(889.4,328.8) scale(1.0)" d="M6.6 0C8.6 0 10.4 1 10.4 3.4L10.4 4.3C11 4.3 11.2 4.7 11.1 5.2C11 5.7 10.7 5.8 10.4 5.8C10.2 7 9.6 8 8.8 8.7C8.8 9.2 9 9.5 9.6 9.8C11.5 10.5 12.8 11.6 13.2 13.8L0 13.8C0.4 11.6 1.7 10.5 3.6 9.8C4.2 9.5 4.4 9.2 4.4 8.7C3.6 8 3 7 2.8 5.8C2.5 5.8 2.2 5.7 2.1 5.2C2 4.7 2.2 4.3 2.8 4.3L2.8 3.4C2.8 1 4.6 0 6.6 0Z" fill="#000000"/>
<path transform="translate(910.4,328.8) scale(1.0)" d="M6.6 0C8.6 0 10.4 1 10.4 3.4L10.4 4.3C11 4.3 11.2 4.7 11.1 5.2C11 5.7 10.7 5.8 10.4 5.8C10.2 7 9.6 8 8.8 8.7C8.8 9.2 9 9.5 9.6 9.8C11.5 10.5 12.8 11.6 13.2 13.8L0 13.8C0.4 11.6 1.7 10.5 3.6 9.8C4.2 9.5 4.4 9.2 4.4 8.7C3.6 8 3 7 2.8 5.8C2.5 5.8 2.2 5.7 2.1 5.2C2 4.7 2.2 4.3 2.8 4.3L2.8 3.4C2.8 1 4.6 0 6.6 0Z" fill="#000000"/>
<rect x="967.6" y="322.5" width="95" height="26" rx="2.8" fill="#86cdec" stroke="#8c9296" stroke-width="1"/>
<text transform="translate(976.0,340.9) scale(0.88,1)" font-size="14.3" fill="#0a0a0a">M</text>
<path transform="translate(993.2,328.8) scale(1.0)" d="M6.6 0C8.6 0 10.4 1 10.4 3.4L10.4 4.3C11 4.3 11.2 4.7 11.1 5.2C11 5.7 10.7 5.8 10.4 5.8C10.2 7 9.6 8 8.8 8.7C8.8 9.2 9 9.5 9.6 9.8C11.5 10.5 12.8 11.6 13.2 13.8L0 13.8C0.4 11.6 1.7 10.5 3.6 9.8C4.2 9.5 4.4 9.2 4.4 8.7C3.6 8 3 7 2.8 5.8C2.5 5.8 2.2 5.7 2.1 5.2C2 4.7 2.2 4.3 2.8 4.3L2.8 3.4C2.8 1 4.6 0 6.6 0Z" fill="#000000"/>
<path transform="translate(1014.2,328.8) scale(1.0)" d="M6.6 0C8.6 0 10.4 1 10.4 3.4L10.4 4.3C11 4.3 11.2 4.7 11.1 5.2C11 5.7 10.7 5.8 10.4 5.8C10.2 7 9.6 8 8.8 8.7C8.8 9.2 9 9.5 9.6 9.8C11.5 10.5 12.8 11.6 13.2 13.8L0 13.8C0.4 11.6 1.7 10.5 3.6 9.8C4.2 9.5 4.4 9.2 4.4 8.7C3.6 8 3 7 2.8 5.8C2.5 5.8 2.2 5.7 2.1 5.2C2 4.7 2.2 4.3 2.8 4.3L2.8 3.4C2.8 1 4.6 0 6.6 0Z" fill="#000000"/>
<path transform="translate(1035.2,328.8) scale(1.0)" d="M6.6 0C8.6 0 10.4 1 10.4 3.4L10.4 4.3C11 4.3 11.2 4.7 11.1 5.2C11 5.7 10.7 5.8 10.4 5.8C10.2 7 9.6 8 8.8 8.7C8.8 9.2 9 9.5 9.6 9.8C11.5 10.5 12.8 11.6 13.2 13.8L0 13.8C0.4 11.6 1.7 10.5 3.6 9.8C4.2 9.5 4.4 9.2 4.4 8.7C3.6 8 3 7 2.8 5.8C2.5 5.8 2.2 5.7 2.1 5.2C2 4.7 2.2 4.3 2.8 4.3L2.8 3.4C2.8 1 4.6 0 6.6 0Z" fill="#000000"/>
<rect x="1066.7" y="322.5" width="95" height="26" rx="2.8" fill="#86cdec" stroke="#8c9296" stroke-width="1"/>
<text transform="translate(1075.1,340.9) scale(0.88,1)" font-size="14.3" fill="#0a0a0a">N</text>
<path transform="translate(1090.7,328.8) scale(1.0)" d="M6.6 0C8.6 0 10.4 1 10.4 3.4L10.4 4.3C11 4.3 11.2 4.7 11.1 5.2C11 5.7 10.7 5.8 10.4 5.8C10.2 7 9.6 8 8.8 8.7C8.8 9.2 9 9.5 9.6 9.8C11.5 10.5 12.8 11.6 13.2 13.8L0 13.8C0.4 11.6 1.7 10.5 3.6 9.8C4.2 9.5 4.4 9.2 4.4 8.7C3.6 8 3 7 2.8 5.8C2.5 5.8 2.2 5.7 2.1 5.2C2 4.7 2.2 4.3 2.8 4.3L2.8 3.4C2.8 1 4.6 0 6.6 0Z" fill="#000000"/>
<path transform="translate(1111.7,328.8) scale(1.0)" d="M6.6 0C8.6 0 10.4 1 10.4 3.4L10.4 4.3C11 4.3 11.2 4.7 11.1 5.2C11 5.7 10.7 5.8 10.4 5.8C10.2 7 9.6 8 8.8 8.7C8.8 9.2 9 9.5 9.6 9.8C11.5 10.5 12.8 11.6 13.2 13.8L0 13.8C0.4 11.6 1.7 10.5 3.6 9.8C4.2 9.5 4.4 9.2 4.4 8.7C3.6 8 3 7 2.8 5.8C2.5 5.8 2.2 5.7 2.1 5.2C2 4.7 2.2 4.3 2.8 4.3L2.8 3.4C2.8 1 4.6 0 6.6 0Z" fill="#000000"/>
<rect x="1165.8" y="322.5" width="95" height="26" rx="2.8" fill="#86cdec" stroke="#8c9296" stroke-width="1"/>
<text transform="translate(1174.2,340.9) scale(0.88,1)" font-size="14.3" fill="#0a0a0a">O</text>
<path transform="translate(1190.6,328.8) scale(1.0)" d="M6.6 0C8.6 0 10.4 1 10.4 3.4L10.4 4.3C11 4.3 11.2 4.7 11.1 5.2C11 5.7 10.7 5.8 10.4 5.8C10.2 7 9.6 8 8.8 8.7C8.8 9.2 9 9.5 9.6 9.8C11.5 10.5 12.8 11.6 13.2 13.8L0 13.8C0.4 11.6 1.7 10.5 3.6 9.8C4.2 9.5 4.4 9.2 4.4 8.7C3.6 8 3 7 2.8 5.8C2.5 5.8 2.2 5.7 2.1 5.2C2 4.7 2.2 4.3 2.8 4.3L2.8 3.4C2.8 1 4.6 0 6.6 0Z" fill="#000000"/>
<rect x="1264.9" y="322.5" width="95" height="26" rx="2.8" fill="#86cdec" stroke="#8c9296" stroke-width="1"/>
<text transform="translate(1273.3,340.9) scale(0.88,1)" font-size="14.3" fill="#0a0a0a">P</text>
<path transform="translate(1287.0,328.8) scale(1.0)" d="M6.6 0C8.6 0 10.4 1 10.4 3.4L10.4 4.3C11 4.3 11.2 4.7 11.1 5.2C11 5.7 10.7 5.8 10.4 5.8C10.2 7 9.6 8 8.8 8.7C8.8 9.2 9 9.5 9.6 9.8C11.5 10.5 12.8 11.6 13.2 13.8L0 13.8C0.4 11.6 1.7 10.5 3.6 9.8C4.2 9.5 4.4 9.2 4.4 8.7C3.6 8 3 7 2.8 5.8C2.5 5.8 2.2 5.7 2.1 5.2C2 4.7 2.2 4.3 2.8 4.3L2.8 3.4C2.8 1 4.6 0 6.6 0Z" fill="#000000"/>
<path transform="translate(1308.0,328.8) scale(1.0)" d="M6.6 0C8.6 0 10.4 1 10.4 3.4L10.4 4.3C11 4.3 11.2 4.7 11.1 5.2C11 5.7 10.7 5.8 10.4 5.8C10.2 7 9.6 8 8.8 8.7C8.8 9.2 9 9.5 9.6 9.8C11.5 10.5 12.8 11.6 13.2 13.8L0 13.8C0.4 11.6 1.7 10.5 3.6 9.8C4.2 9.5 4.4 9.2 4.4 8.7C3.6 8 3 7 2.8 5.8C2.5 5.8 2.2 5.7 2.1 5.2C2 4.7 2.2 4.3 2.8 4.3L2.8 3.4C2.8 1 4.6 0 6.6 0Z" fill="#000000"/>
<rect x="868.5" y="352.5" width="95" height="26" rx="2.8" fill="#86cdec" stroke="#8c9296" stroke-width="1"/>
<text transform="translate(876.9,370.9) scale(0.88,1)" font-size="14.3" fill="#0a0a0a">R</text>
<path transform="translate(891.4,358.8) scale(1.0)" d="M6.6 0C8.6 0 10.4 1 10.4 3.4L10.4 4.3C11 4.3 11.2 4.7 11.1 5.2C11 5.7 10.7 5.8 10.4 5.8C10.2 7 9.6 8 8.8 8.7C8.8 9.2 9 9.5 9.6 9.8C11.5 10.5 12.8 11.6 13.2 13.8L0 13.8C0.4 11.6 1.7 10.5 3.6 9.8C4.2 9.5 4.4 9.2 4.4 8.7C3.6 8 3 7 2.8 5.8C2.5 5.8 2.2 5.7 2.1 5.2C2 4.7 2.2 4.3 2.8 4.3L2.8 3.4C2.8 1 4.6 0 6.6 0Z" fill="#000000"/>
<path transform="translate(912.4,358.8) scale(1.0)" d="M6.6 0C8.6 0 10.4 1 10.4 3.4L10.4 4.3C11 4.3 11.2 4.7 11.1 5.2C11 5.7 10.7 5.8 10.4 5.8C10.2 7 9.6 8 8.8 8.7C8.8 9.2 9 9.5 9.6 9.8C11.5 10.5 12.8 11.6 13.2 13.8L0 13.8C0.4 11.6 1.7 10.5 3.6 9.8C4.2 9.5 4.4 9.2 4.4 8.7C3.6 8 3 7 2.8 5.8C2.5 5.8 2.2 5.7 2.1 5.2C2 4.7 2.2 4.3 2.8 4.3L2.8 3.4C2.8 1 4.6 0 6.6 0Z" fill="#000000"/>
<rect x="967.6" y="352.5" width="95" height="26" rx="2.8" fill="#86cdec" stroke="#8c9296" stroke-width="1"/>
<text transform="translate(976.0,370.9) scale(0.88,1)" font-size="14.3" fill="#0a0a0a">S</text>
<path transform="translate(988.4,358.8) scale(1.0)" d="M6.6 0C8.6 0 10.4 1 10.4 3.4L10.4 4.3C11 4.3 11.2 4.7 11.1 5.2C11 5.7 10.7 5.8 10.4 5.8C10.2 7 9.6 8 8.8 8.7C8.8 9.2 9 9.5 9.6 9.8C11.5 10.5 12.8 11.6 13.2 13.8L0 13.8C0.4 11.6 1.7 10.5 3.6 9.8C4.2 9.5 4.4 9.2 4.4 8.7C3.6 8 3 7 2.8 5.8C2.5 5.8 2.2 5.7 2.1 5.2C2 4.7 2.2 4.3 2.8 4.3L2.8 3.4C2.8 1 4.6 0 6.6 0Z" fill="#000000"/>
<path transform="translate(1009.4,358.8) scale(1.0)" d="M6.6 0C8.6 0 10.4 1 10.4 3.4L10.4 4.3C11 4.3 11.2 4.7 11.1 5.2C11 5.7 10.7 5.8 10.4 5.8C10.2 7 9.6 8 8.8 8.7C8.8 9.2 9 9.5 9.6 9.8C11.5 10.5 12.8 11.6 13.2 13.8L0 13.8C0.4 11.6 1.7 10.5 3.6 9.8C4.2 9.5 4.4 9.2 4.4 8.7C3.6 8 3 7 2.8 5.8C2.5 5.8 2.2 5.7 2.1 5.2C2 4.7 2.2 4.3 2.8 4.3L2.8 3.4C2.8 1 4.6 0 6.6 0Z" fill="#000000"/>
<path transform="translate(1030.4,358.8) scale(1.0)" d="M6.6 0C8.6 0 10.4 1 10.4 3.4L10.4 4.3C11 4.3 11.2 4.7 11.1 5.2C11 5.7 10.7 5.8 10.4 5.8C10.2 7 9.6 8 8.8 8.7C8.8 9.2 9 9.5 9.6 9.8C11.5 10.5 12.8 11.6 13.2 13.8L0 13.8C0.4 11.6 1.7 10.5 3.6 9.8C4.2 9.5 4.4 9.2 4.4 8.7C3.6 8 3 7 2.8 5.8C2.5 5.8 2.2 5.7 2.1 5.2C2 4.7 2.2 4.3 2.8 4.3L2.8 3.4C2.8 1 4.6 0 6.6 0Z" fill="#000000"/>
<rect x="1066.7" y="352.5" width="95" height="26" rx="2.8" fill="#86cdec" stroke="#8c9296" stroke-width="1"/>
<text transform="translate(1075.1,370.9) scale(0.88,1)" font-size="14.3" fill="#0a0a0a">T</text>
<path transform="translate(1087.5,358.8) scale(1.0)" d="M6.6 0C8.6 0 10.4 1 10.4 3.4L10.4 4.3C11 4.3 11.2 4.7 11.1 5.2C11 5.7 10.7 5.8 10.4 5.8C10.2 7 9.6 8 8.8 8.7C8.8 9.2 9 9.5 9.6 9.8C11.5 10.5 12.8 11.6 13.2 13.8L0 13.8C0.4 11.6 1.7 10.5 3.6 9.8C4.2 9.5 4.4 9.2 4.4 8.7C3.6 8 3 7 2.8 5.8C2.5 5.8 2.2 5.7 2.1 5.2C2 4.7 2.2 4.3 2.8 4.3L2.8 3.4C2.8 1 4.6 0 6.6 0Z" fill="#000000"/>
<path transform="translate(1108.5,358.8) scale(1.0)" d="M6.6 0C8.6 0 10.4 1 10.4 3.4L10.4 4.3C11 4.3 11.2 4.7 11.1 5.2C11 5.7 10.7 5.8 10.4 5.8C10.2 7 9.6 8 8.8 8.7C8.8 9.2 9 9.5 9.6 9.8C11.5 10.5 12.8 11.6 13.2 13.8L0 13.8C0.4 11.6 1.7 10.5 3.6 9.8C4.2 9.5 4.4 9.2 4.4 8.7C3.6 8 3 7 2.8 5.8C2.5 5.8 2.2 5.7 2.1 5.2C2 4.7 2.2 4.3 2.8 4.3L2.8 3.4C2.8 1 4.6 0 6.6 0Z" fill="#000000"/>
<rect x="1165.8" y="352.5" width="95" height="26" rx="2.8" fill="#86cdec" stroke="#8c9296" stroke-width="1"/>
<text transform="translate(1174.2,370.9) scale(0.88,1)" font-size="14.3" fill="#0a0a0a">U</text>
<path transform="translate(1188.6,358.8) scale(1.0)" d="M6.6 0C8.6 0 10.4 1 10.4 3.4L10.4 4.3C11 4.3 11.2 4.7 11.1 5.2C11 5.7 10.7 5.8 10.4 5.8C10.2 7 9.6 8 8.8 8.7C8.8 9.2 9 9.5 9.6 9.8C11.5 10.5 12.8 11.6 13.2 13.8L0 13.8C0.4 11.6 1.7 10.5 3.6 9.8C4.2 9.5 4.4 9.2 4.4 8.7C3.6 8 3 7 2.8 5.8C2.5 5.8 2.2 5.7 2.1 5.2C2 4.7 2.2 4.3 2.8 4.3L2.8 3.4C2.8 1 4.6 0 6.6 0Z" fill="#000000"/>
<rect x="1264.9" y="352.5" width="95" height="26" rx="2.8" fill="#86cdec" stroke="#8c9296" stroke-width="1"/>
<text transform="translate(1273.3,370.9) scale(0.88,1)" font-size="14.3" fill="#0a0a0a">V</text>
<path transform="translate(1286.5,358.8) scale(1.0)" d="M6.6 0C8.6 0 10.4 1 10.4 3.4L10.4 4.3C11 4.3 11.2 4.7 11.1 5.2C11 5.7 10.7 5.8 10.4 5.8C10.2 7 9.6 8 8.8 8.7C8.8 9.2 9 9.5 9.6 9.8C11.5 10.5 12.8 11.6 13.2 13.8L0 13.8C0.4 11.6 1.7 10.5 3.6 9.8C4.2 9.5 4.4 9.2 4.4 8.7C3.6 8 3 7 2.8 5.8C2.5 5.8 2.2 5.7 2.1 5.2C2 4.7 2.2 4.3 2.8 4.3L2.8 3.4C2.8 1 4.6 0 6.6 0Z" fill="#000000"/>
<rect x="868.5" y="382.5" width="95" height="26" rx="2.8" fill="#86cdec" stroke="#8c9296" stroke-width="1"/>
<text transform="translate(876.9,400.9) scale(0.88,1)" font-size="14.3" fill="#0a0a0a">W</text>
<path transform="translate(894.2,388.8) scale(1.0)" d="M6.6 0C8.6 0 10.4 1 10.4 3.4L10.4 4.3C11 4.3 11.2 4.7 11.1 5.2C11 5.7 10.7 5.8 10.4 5.8C10.2 7 9.6 8 8.8 8.7C8.8 9.2 9 9.5 9.6 9.8C11.5 10.5 12.8 11.6 13.2 13.8L0 13.8C0.4 11.6 1.7 10.5 3.6 9.8C4.2 9.5 4.4 9.2 4.4 8.7C3.6 8 3 7 2.8 5.8C2.5 5.8 2.2 5.7 2.1 5.2C2 4.7 2.2 4.3 2.8 4.3L2.8 3.4C2.8 1 4.6 0 6.6 0Z" fill="#000000"/>
<path transform="translate(915.2,388.8) scale(1.0)" d="M6.6 0C8.6 0 10.4 1 10.4 3.4L10.4 4.3C11 4.3 11.2 4.7 11.1 5.2C11 5.7 10.7 5.8 10.4 5.8C10.2 7 9.6 8 8.8 8.7C8.8 9.2 9 9.5 9.6 9.8C11.5 10.5 12.8 11.6 13.2 13.8L0 13.8C0.4 11.6 1.7 10.5 3.6 9.8C4.2 9.5 4.4 9.2 4.4 8.7C3.6 8 3 7 2.8 5.8C2.5 5.8 2.2 5.7 2.1 5.2C2 4.7 2.2 4.3 2.8 4.3L2.8 3.4C2.8 1 4.6 0 6.6 0Z" fill="#000000"/>
<path transform="translate(936.2,388.8) scale(1.0)" d="M6.6 0C8.6 0 10.4 1 10.4 3.4L10.4 4.3C11 4.3 11.2 4.7 11.1 5.2C11 5.7 10.7 5.8 10.4 5.8C10.2 7 9.6 8 8.8 8.7C8.8 9.2 9 9.5 9.6 9.8C11.5 10.5 12.8 11.6 13.2 13.8L0 13.8C0.4 11.6 1.7 10.5 3.6 9.8C4.2 9.5 4.4 9.2 4.4 8.7C3.6 8 3 7 2.8 5.8C2.5 5.8 2.2 5.7 2.1 5.2C2 4.7 2.2 4.3 2.8 4.3L2.8 3.4C2.8 1 4.6 0 6.6 0Z" fill="#000000"/>
<rect x="967.6" y="382.5" width="95" height="26" rx="2.8" fill="#86cdec" stroke="#8c9296" stroke-width="1"/>
<text transform="translate(976.0,400.9) scale(0.88,1)" font-size="14.3" fill="#0a0a0a">Z</text>
<path transform="translate(988.4,388.8) scale(1.0)" d="M6.6 0C8.6 0 10.4 1 10.4 3.4L10.4 4.3C11 4.3 11.2 4.7 11.1 5.2C11 5.7 10.7 5.8 10.4 5.8C10.2 7 9.6 8 8.8 8.7C8.8 9.2 9 9.5 9.6 9.8C11.5 10.5 12.8 11.6 13.2 13.8L0 13.8C0.4 11.6 1.7 10.5 3.6 9.8C4.2 9.5 4.4 9.2 4.4 8.7C3.6 8 3 7 2.8 5.8C2.5 5.8 2.2 5.7 2.1 5.2C2 4.7 2.2 4.3 2.8 4.3L2.8 3.4C2.8 1 4.6 0 6.6 0Z" fill="#000000"/>
</g>
<defs><linearGradient id="fbg" x1="0" y1="0" x2="0" y2="1"><stop offset="0" stop-color="#ffffff"/><stop offset="0.5" stop-color="#f6f6f6"/><stop offset="1" stop-color="#e4e4e4"/></linearGradient></defs>
<rect x="27" y="422" width="1118.5" height="20.5" fill="#175e82"/>
<line x1="27" y1="422.5" x2="1145.5" y2="422.5" stroke="#36a0da" stroke-width="1"/>
<rect x="27" y="442.5" width="1118.5" height="20" fill="#c0e4f5"/>
<rect x="27" y="482.5" width="1118.5" height="20" fill="#c0e4f5"/>
<rect x="27" y="522.5" width="1118.5" height="20" fill="#c0e4f5"/>
<line x1="27" y1="462.5" x2="1145.5" y2="462.5" stroke="#45aadc" stroke-width="1.2"/>
<line x1="27" y1="482.5" x2="1145.5" y2="482.5" stroke="#45aadc" stroke-width="1.2"/>
<line x1="27" y1="502.5" x2="1145.5" y2="502.5" stroke="#45aadc" stroke-width="1.2"/>
<line x1="27" y1="522.5" x2="1145.5" y2="522.5" stroke="#45aadc" stroke-width="1.2"/>
<line x1="27" y1="542.5" x2="1145.5" y2="542.5" stroke="#45aadc" stroke-width="1.2"/>
<line x1="1145.5" y1="422" x2="1145.5" y2="548" stroke="#45aadc" stroke-width="1.2"/>
<line x1="27" y1="442.5" x2="1380" y2="442.5" stroke="#8a8a8a" stroke-width="1"/>
<text x="29.4" y="437.9" font-size="13" font-weight="bold" fill="#ffffff" textLength="28.5" lengthAdjust="spacingAndGlyphs">Kdnr</text>
<rect x="90.6" y="424.5" width="16" height="16" fill="url(#fbg)" stroke="#c2c2c2" stroke-width="1"/>
<path d="M94.9 430.9h7.4l-3.7 4.1z" fill="#666666"/>
<text x="110.0" y="437.9" font-size="13" font-weight="bold" fill="#ffffff" textLength="56.7" lengthAdjust="spacingAndGlyphs">Vorname</text>
<rect x="171.7" y="424.5" width="16" height="16" fill="url(#fbg)" stroke="#c2c2c2" stroke-width="1"/>
<path d="M176.0 430.9h7.4l-3.7 4.1z" fill="#666666"/>
<text x="191.4" y="437.9" font-size="13" font-weight="bold" fill="#ffffff" textLength="36.4" lengthAdjust="spacingAndGlyphs">Name</text>
<rect x="271.7" y="424.5" width="16" height="16" fill="url(#fbg)" stroke="#c2c2c2" stroke-width="1"/>
<path d="M276.0 430.9h7.4l-3.7 4.1z" fill="#666666"/>
<text x="291.3" y="437.9" font-size="13" font-weight="bold" fill="#ffffff" textLength="39.3" lengthAdjust="spacingAndGlyphs">Straße</text>
<rect x="475.7" y="424.5" width="16" height="16" fill="url(#fbg)" stroke="#c2c2c2" stroke-width="1"/>
<path d="M480.0 430.9h7.4l-3.7 4.1z" fill="#666666"/>
<text x="495.4" y="437.9" font-size="13" font-weight="bold" fill="#ffffff" textLength="20.4" lengthAdjust="spacingAndGlyphs">PLZ</text>
<rect x="556.7" y="424.5" width="16" height="16" fill="url(#fbg)" stroke="#c2c2c2" stroke-width="1"/>
<path d="M561.0 430.9h7.4l-3.7 4.1z" fill="#666666"/>
<text x="576.3" y="437.9" font-size="13" font-weight="bold" fill="#ffffff" textLength="19.3" lengthAdjust="spacingAndGlyphs">Ort</text>
<rect x="754.8" y="424.5" width="16" height="16" fill="url(#fbg)" stroke="#c2c2c2" stroke-width="1"/>
<path d="M759.1 430.9h7.4l-3.7 4.1z" fill="#666666"/>
<text x="774.4" y="437.9" font-size="13" font-weight="bold" fill="#ffffff" textLength="63.0" lengthAdjust="spacingAndGlyphs">Buchstabe</text>
<rect x="839.7" y="424.5" width="16" height="16" fill="url(#fbg)" stroke="#c2c2c2" stroke-width="1"/>
<path d="M844.0 430.9h7.4l-3.7 4.1z" fill="#666666"/>
<text x="859.2" y="437.9" font-size="13" font-weight="bold" fill="#ffffff" textLength="41.1" lengthAdjust="spacingAndGlyphs">Anzahl</text>
<rect x="920.6" y="424.5" width="16" height="16" fill="url(#fbg)" stroke="#c2c2c2" stroke-width="1"/>
<path d="M924.9 430.9h7.4l-3.7 4.1z" fill="#666666"/>
<text x="940.6" y="437.9" font-size="13" font-weight="bold" fill="#ffffff" textLength="80.6" lengthAdjust="spacingAndGlyphs">Buchstabe v2</text>
<rect x="1024.7" y="424.5" width="16" height="16" fill="url(#fbg)" stroke="#c2c2c2" stroke-width="1"/>
<path d="M1029.0 430.9h7.4l-3.7 4.1z" fill="#666666"/>
<text x="1044.5" y="437.9" font-size="13" font-weight="bold" fill="#ffffff" textLength="80.2" lengthAdjust="spacingAndGlyphs">Buchstabe v3</text>
<rect x="1128.7" y="424.5" width="16" height="16" fill="url(#fbg)" stroke="#c2c2c2" stroke-width="1"/>
<path d="M1133.0 430.9h7.4l-3.7 4.1z" fill="#666666"/>
<g class="tb">
<text x="70.5" y="457.5" font-size="12.8" fill="#000000" textLength="33.9" lengthAdjust="spacingAndGlyphs">10000</text>
<text x="110.0" y="457.5" font-size="12.8" fill="#000000" textLength="43.9" lengthAdjust="spacingAndGlyphs">Andrea</text>
<text x="191.4" y="457.5" font-size="12.8" fill="#000000" textLength="57.8" lengthAdjust="spacingAndGlyphs">Drechsler</text>
<text x="291.3" y="457.5" font-size="12.8" fill="#000000" textLength="94.8" lengthAdjust="spacingAndGlyphs">Chausseestr. 41</text>
<text x="576.3" y="457.5" font-size="12.8" fill="#000000" textLength="83.3" lengthAdjust="spacingAndGlyphs">Altentreptow</text>
<text x="495.4" y="457.5" font-size="12.8" fill="#000000" textLength="34.2" lengthAdjust="spacingAndGlyphs">17080</text>
<text transform="translate(774.4,457.5) scale(0.92,1)" font-size="12.8" fill="#000000">D</text>
<text x="921.6" y="457.5" font-size="12.8" fill="#000000" textLength="13.2" lengthAdjust="spacingAndGlyphs">19</text>
<text transform="translate(940.6,457.5) scale(0.97,1)" font-size="12.8" fill="#000000">D (19)</text>
<text transform="translate(1044.5,457.5) scale(0.92,1)" font-size="12.8" fill="#000000">D</text>
<path transform="translate(1058.9,446.0) scale(1.0)" d="M6.6 0C8.6 0 10.4 1 10.4 3.4L10.4 4.3C11 4.3 11.2 4.7 11.1 5.2C11 5.7 10.7 5.8 10.4 5.8C10.2 7 9.6 8 8.8 8.7C8.8 9.2 9 9.5 9.6 9.8C11.5 10.5 12.8 11.6 13.2 13.8L0 13.8C0.4 11.6 1.7 10.5 3.6 9.8C4.2 9.5 4.4 9.2 4.4 8.7C3.6 8 3 7 2.8 5.8C2.5 5.8 2.2 5.7 2.1 5.2C2 4.7 2.2 4.3 2.8 4.3L2.8 3.4C2.8 1 4.6 0 6.6 0Z" fill="#000000"/>
<path transform="translate(1079.9,446.0) scale(1.0)" d="M6.6 0C8.6 0 10.4 1 10.4 3.4L10.4 4.3C11 4.3 11.2 4.7 11.1 5.2C11 5.7 10.7 5.8 10.4 5.8C10.2 7 9.6 8 8.8 8.7C8.8 9.2 9 9.5 9.6 9.8C11.5 10.5 12.8 11.6 13.2 13.8L0 13.8C0.4 11.6 1.7 10.5 3.6 9.8C4.2 9.5 4.4 9.2 4.4 8.7C3.6 8 3 7 2.8 5.8C2.5 5.8 2.2 5.7 2.1 5.2C2 4.7 2.2 4.3 2.8 4.3L2.8 3.4C2.8 1 4.6 0 6.6 0Z" fill="#000000"/>
<path d="M492.8 442.9h6.2l-6.2 6.4z" fill="#0f7b0f"/>
<text x="70.5" y="477.5" font-size="12.8" fill="#000000" textLength="33.9" lengthAdjust="spacingAndGlyphs">10001</text>
<text x="110.0" y="477.5" font-size="12.8" fill="#000000" textLength="43.9" lengthAdjust="spacingAndGlyphs">Andrea</text>
<text x="191.4" y="477.5" font-size="12.8" fill="#000000" textLength="26.9" lengthAdjust="spacingAndGlyphs">Cole</text>
<text x="291.3" y="477.5" font-size="12.8" fill="#000000" textLength="126.0" lengthAdjust="spacingAndGlyphs">Knesebeckstrasse 78</text>
<text x="576.3" y="477.5" font-size="12.8" fill="#000000" textLength="42.3" lengthAdjust="spacingAndGlyphs">Urbach</text>
<text x="495.4" y="477.5" font-size="12.8" fill="#000000" textLength="34.2" lengthAdjust="spacingAndGlyphs">73660</text>
<text transform="translate(774.4,477.5) scale(0.92,1)" font-size="12.8" fill="#000000">C</text>
<text x="928.2" y="477.5" font-size="12.8" fill="#000000" textLength="6.6" lengthAdjust="spacingAndGlyphs">4</text>
<text transform="translate(940.6,477.5) scale(0.97,1)" font-size="12.8" fill="#000000">C (4)</text>
<text transform="translate(1044.5,477.5) scale(0.92,1)" font-size="12.8" fill="#000000">C</text>
<path transform="translate(1057.9,466.0) scale(1.0)" d="M6.6 0C8.6 0 10.4 1 10.4 3.4L10.4 4.3C11 4.3 11.2 4.7 11.1 5.2C11 5.7 10.7 5.8 10.4 5.8C10.2 7 9.6 8 8.8 8.7C8.8 9.2 9 9.5 9.6 9.8C11.5 10.5 12.8 11.6 13.2 13.8L0 13.8C0.4 11.6 1.7 10.5 3.6 9.8C4.2 9.5 4.4 9.2 4.4 8.7C3.6 8 3 7 2.8 5.8C2.5 5.8 2.2 5.7 2.1 5.2C2 4.7 2.2 4.3 2.8 4.3L2.8 3.4C2.8 1 4.6 0 6.6 0Z" fill="#000000"/>
<path d="M492.8 462.9h6.2l-6.2 6.4z" fill="#0f7b0f"/>
<text x="70.5" y="497.5" font-size="12.8" fill="#000000" textLength="33.9" lengthAdjust="spacingAndGlyphs">10002</text>
<text x="110.0" y="497.5" font-size="12.8" fill="#000000" textLength="50.7" lengthAdjust="spacingAndGlyphs">Andreas</text>
<text x="191.4" y="497.5" font-size="12.8" fill="#000000" textLength="66.3" lengthAdjust="spacingAndGlyphs">Friedmann</text>
<text x="291.3" y="497.5" font-size="12.8" fill="#000000" textLength="100.0" lengthAdjust="spacingAndGlyphs">Büsingstrasse 99</text>
<text x="576.3" y="497.5" font-size="12.8" fill="#000000" textLength="60.0" lengthAdjust="spacingAndGlyphs">Brunnthal</text>
<text x="495.4" y="497.5" font-size="12.8" fill="#000000" textLength="34.2" lengthAdjust="spacingAndGlyphs">85649</text>
<text transform="translate(774.4,497.5) scale(0.92,1)" font-size="12.8" fill="#000000">F</text>
<text x="921.6" y="497.5" font-size="12.8" fill="#000000" textLength="13.2" lengthAdjust="spacingAndGlyphs">56</text>
<text transform="translate(940.6,497.5) scale(0.97,1)" font-size="12.8" fill="#000000">F (56)</text>
<text transform="translate(1044.5,497.5) scale(0.92,1)" font-size="12.8" fill="#000000">F</text>
<path transform="translate(1057.0,486.0) scale(1.0)" d="M6.6 0C8.6 0 10.4 1 10.4 3.4L10.4 4.3C11 4.3 11.2 4.7 11.1 5.2C11 5.7 10.7 5.8 10.4 5.8C10.2 7 9.6 8 8.8 8.7C8.8 9.2 9 9.5 9.6 9.8C11.5 10.5 12.8 11.6 13.2 13.8L0 13.8C0.4 11.6 1.7 10.5 3.6 9.8C4.2 9.5 4.4 9.2 4.4 8.7C3.6 8 3 7 2.8 5.8C2.5 5.8 2.2 5.7 2.1 5.2C2 4.7 2.2 4.3 2.8 4.3L2.8 3.4C2.8 1 4.6 0 6.6 0Z" fill="#000000"/>
<path transform="translate(1078.0,486.0) scale(1.0)" d="M6.6 0C8.6 0 10.4 1 10.4 3.4L10.4 4.3C11 4.3 11.2 4.7 11.1 5.2C11 5.7 10.7 5.8 10.4 5.8C10.2 7 9.6 8 8.8 8.7C8.8 9.2 9 9.5 9.6 9.8C11.5 10.5 12.8 11.6 13.2 13.8L0 13.8C0.4 11.6 1.7 10.5 3.6 9.8C4.2 9.5 4.4 9.2 4.4 8.7C3.6 8 3 7 2.8 5.8C2.5 5.8 2.2 5.7 2.1 5.2C2 4.7 2.2 4.3 2.8 4.3L2.8 3.4C2.8 1 4.6 0 6.6 0Z" fill="#000000"/>
<path transform="translate(1099.0,486.0) scale(1.0)" d="M6.6 0C8.6 0 10.4 1 10.4 3.4L10.4 4.3C11 4.3 11.2 4.7 11.1 5.2C11 5.7 10.7 5.8 10.4 5.8C10.2 7 9.6 8 8.8 8.7C8.8 9.2 9 9.5 9.6 9.8C11.5 10.5 12.8 11.6 13.2 13.8L0 13.8C0.4 11.6 1.7 10.5 3.6 9.8C4.2 9.5 4.4 9.2 4.4 8.7C3.6 8 3 7 2.8 5.8C2.5 5.8 2.2 5.7 2.1 5.2C2 4.7 2.2 4.3 2.8 4.3L2.8 3.4C2.8 1 4.6 0 6.6 0Z" fill="#000000"/>
<path d="M492.8 482.9h6.2l-6.2 6.4z" fill="#0f7b0f"/>
<text x="70.5" y="517.5" font-size="12.8" fill="#000000" textLength="33.9" lengthAdjust="spacingAndGlyphs">10003</text>
<text x="110.0" y="517.5" font-size="12.8" fill="#000000" textLength="50.7" lengthAdjust="spacingAndGlyphs">Andreas</text>
<text x="191.4" y="517.5" font-size="12.8" fill="#000000" textLength="59.0" lengthAdjust="spacingAndGlyphs">Rothstein</text>
<text x="291.3" y="517.5" font-size="12.8" fill="#000000" textLength="101.6" lengthAdjust="spacingAndGlyphs">An Der Urania 57</text>
<text x="576.3" y="517.5" font-size="12.8" fill="#000000" textLength="39.0" lengthAdjust="spacingAndGlyphs">Marne</text>
<text x="495.4" y="517.5" font-size="12.8" fill="#000000" textLength="34.2" lengthAdjust="spacingAndGlyphs">25706</text>
<text transform="translate(774.4,517.5) scale(0.92,1)" font-size="12.8" fill="#000000">R</text>
<text x="921.6" y="517.5" font-size="12.8" fill="#000000" textLength="13.2" lengthAdjust="spacingAndGlyphs">15</text>
<text transform="translate(940.6,517.5) scale(0.97,1)" font-size="12.8" fill="#000000">R (15)</text>
<text transform="translate(1044.5,517.5) scale(0.92,1)" font-size="12.8" fill="#000000">R</text>
<path transform="translate(1058.4,506.0) scale(1.0)" d="M6.6 0C8.6 0 10.4 1 10.4 3.4L10.4 4.3C11 4.3 11.2 4.7 11.1 5.2C11 5.7 10.7 5.8 10.4 5.8C10.2 7 9.6 8 8.8 8.7C8.8 9.2 9 9.5 9.6 9.8C11.5 10.5 12.8 11.6 13.2 13.8L0 13.8C0.4 11.6 1.7 10.5 3.6 9.8C4.2 9.5 4.4 9.2 4.4 8.7C3.6 8 3 7 2.8 5.8C2.5 5.8 2.2 5.7 2.1 5.2C2 4.7 2.2 4.3 2.8 4.3L2.8 3.4C2.8 1 4.6 0 6.6 0Z" fill="#000000"/>
<path transform="translate(1079.4,506.0) scale(1.0)" d="M6.6 0C8.6 0 10.4 1 10.4 3.4L10.4 4.3C11 4.3 11.2 4.7 11.1 5.2C11 5.7 10.7 5.8 10.4 5.8C10.2 7 9.6 8 8.8 8.7C8.8 9.2 9 9.5 9.6 9.8C11.5 10.5 12.8 11.6 13.2 13.8L0 13.8C0.4 11.6 1.7 10.5 3.6 9.8C4.2 9.5 4.4 9.2 4.4 8.7C3.6 8 3 7 2.8 5.8C2.5 5.8 2.2 5.7 2.1 5.2C2 4.7 2.2 4.3 2.8 4.3L2.8 3.4C2.8 1 4.6 0 6.6 0Z" fill="#000000"/>
<path d="M492.8 502.9h6.2l-6.2 6.4z" fill="#0f7b0f"/>
<text x="70.5" y="537.5" font-size="12.8" fill="#000000" textLength="33.9" lengthAdjust="spacingAndGlyphs">10004</text>
<text x="110.0" y="537.5" font-size="12.8" fill="#000000" textLength="50.7" lengthAdjust="spacingAndGlyphs">Andreas</text>
<text x="191.4" y="537.5" font-size="12.8" fill="#000000" textLength="35.7" lengthAdjust="spacingAndGlyphs">Nagel</text>
<text x="291.3" y="537.5" font-size="12.8" fill="#000000" textLength="149.0" lengthAdjust="spacingAndGlyphs">Luckenwalder Strasse 79</text>
<text x="576.3" y="537.5" font-size="12.8" fill="#000000" textLength="66.3" lengthAdjust="spacingAndGlyphs">Meinersen</text>
<text x="495.4" y="537.5" font-size="12.8" fill="#000000" textLength="34.2" lengthAdjust="spacingAndGlyphs">38536</text>
<text transform="translate(774.4,537.5) scale(0.92,1)" font-size="12.8" fill="#000000">N</text>
<text x="921.6" y="537.5" font-size="12.8" fill="#000000" textLength="13.2" lengthAdjust="spacingAndGlyphs">10</text>
<text transform="translate(940.6,537.5) scale(0.97,1)" font-size="12.8" fill="#000000">N (10)</text>
<text transform="translate(1044.5,537.5) scale(0.92,1)" font-size="12.8" fill="#000000">N</text>
<path transform="translate(1059.4,526.0) scale(1.0)" d="M6.6 0C8.6 0 10.4 1 10.4 3.4L10.4 4.3C11 4.3 11.2 4.7 11.1 5.2C11 5.7 10.7 5.8 10.4 5.8C10.2 7 9.6 8 8.8 8.7C8.8 9.2 9 9.5 9.6 9.8C11.5 10.5 12.8 11.6 13.2 13.8L0 13.8C0.4 11.6 1.7 10.5 3.6 9.8C4.2 9.5 4.4 9.2 4.4 8.7C3.6 8 3 7 2.8 5.8C2.5 5.8 2.2 5.7 2.1 5.2C2 4.7 2.2 4.3 2.8 4.3L2.8 3.4C2.8 1 4.6 0 6.6 0Z" fill="#000000"/>
<path transform="translate(1080.4,526.0) scale(1.0)" d="M6.6 0C8.6 0 10.4 1 10.4 3.4L10.4 4.3C11 4.3 11.2 4.7 11.1 5.2C11 5.7 10.7 5.8 10.4 5.8C10.2 7 9.6 8 8.8 8.7C8.8 9.2 9 9.5 9.6 9.8C11.5 10.5 12.8 11.6 13.2 13.8L0 13.8C0.4 11.6 1.7 10.5 3.6 9.8C4.2 9.5 4.4 9.2 4.4 8.7C3.6 8 3 7 2.8 5.8C2.5 5.8 2.2 5.7 2.1 5.2C2 4.7 2.2 4.3 2.8 4.3L2.8 3.4C2.8 1 4.6 0 6.6 0Z" fill="#000000"/>
<path d="M492.8 522.9h6.2l-6.2 6.4z" fill="#0f7b0f"/>
</g>
<path d="M492.8 542.9h6.2l-6.2 6.4z" fill="#0f7b0f"/>
<path transform="translate(1058.0,546.0) scale(1.0)" d="M6.6 0C8.6 0 10.4 1 10.4 3.4L10.4 4.3C11 4.3 11.2 4.7 11.1 5.2C11 5.7 10.7 5.8 10.4 5.8C10.2 7 9.6 8 8.8 8.7C8.8 9.2 9 9.5 9.6 9.8C11.5 10.5 12.8 11.6 13.2 13.8L0 13.8C0.4 11.6 1.7 10.5 3.6 9.8C4.2 9.5 4.4 9.2 4.4 8.7C3.6 8 3 7 2.8 5.8C2.5 5.8 2.2 5.7 2.1 5.2C2 4.7 2.2 4.3 2.8 4.3L2.8 3.4C2.8 1 4.6 0 6.6 0Z" fill="#000000"/>
<path transform="translate(1079.0,546.0) scale(1.0)" d="M6.6 0C8.6 0 10.4 1 10.4 3.4L10.4 4.3C11 4.3 11.2 4.7 11.1 5.2C11 5.7 10.7 5.8 10.4 5.8C10.2 7 9.6 8 8.8 8.7C8.8 9.2 9 9.5 9.6 9.8C11.5 10.5 12.8 11.6 13.2 13.8L0 13.8C0.4 11.6 1.7 10.5 3.6 9.8C4.2 9.5 4.4 9.2 4.4 8.7C3.6 8 3 7 2.8 5.8C2.5 5.8 2.2 5.7 2.1 5.2C2 4.7 2.2 4.3 2.8 4.3L2.8 3.4C2.8 1 4.6 0 6.6 0Z" fill="#000000"/>
<path transform="translate(1100.0,546.0) scale(1.0)" d="M6.6 0C8.6 0 10.4 1 10.4 3.4L10.4 4.3C11 4.3 11.2 4.7 11.1 5.2C11 5.7 10.7 5.8 10.4 5.8C10.2 7 9.6 8 8.8 8.7C8.8 9.2 9 9.5 9.6 9.8C11.5 10.5 12.8 11.6 13.2 13.8L0 13.8C0.4 11.6 1.7 10.5 3.6 9.8C4.2 9.5 4.4 9.2 4.4 8.7C3.6 8 3 7 2.8 5.8C2.5 5.8 2.2 5.7 2.1 5.2C2 4.7 2.2 4.3 2.8 4.3L2.8 3.4C2.8 1 4.6 0 6.6 0Z" fill="#000000"/>
<line x1="860" y1="229" x2="860" y2="420.5" stroke="#5c5c5c" stroke-width="1.3"/>
<line x1="1369.5" y1="229" x2="1369.5" y2="420.5" stroke="#5c5c5c" stroke-width="1.3"/>
<line x1="860" y1="420.4" x2="1369.5" y2="420.4" stroke="#5c5c5c" stroke-width="1.3"/>
<clipPath id="cps"><rect x="0" y="229" width="1380" height="330"/></clipPath>
<g clip-path="url(#cps)">
<circle cx="860.3" cy="227.7" r="4.6" fill="#ffffff" stroke="#505050" stroke-width="1.4"/>
<circle cx="1115" cy="227.7" r="4.6" fill="#ffffff" stroke="#505050" stroke-width="1.4"/>
<circle cx="1369.5" cy="227.7" r="4.6" fill="#ffffff" stroke="#505050" stroke-width="1.4"/>
<circle cx="860.3" cy="324" r="4.6" fill="#ffffff" stroke="#505050" stroke-width="1.4"/>
<circle cx="1369.5" cy="324" r="4.6" fill="#ffffff" stroke="#505050" stroke-width="1.4"/>
<circle cx="860.3" cy="420.4" r="4.6" fill="#ffffff" stroke="#505050" stroke-width="1.4"/>
<circle cx="1115" cy="420.4" r="4.6" fill="#ffffff" stroke="#505050" stroke-width="1.4"/>
<circle cx="1369.5" cy="420.4" r="4.6" fill="#ffffff" stroke="#505050" stroke-width="1.4"/>
</g>
<rect x="967.5" y="34" width="299" height="105.5" fill="none" stroke="#000" stroke-opacity="0.4" stroke-width="3.4" filter="url(#fr)"/>
<rect x="967.5" y="30.5" width="299" height="105.5" fill="none" stroke="#f73c42" stroke-width="3.2"/>
</svg>
</body></html>
